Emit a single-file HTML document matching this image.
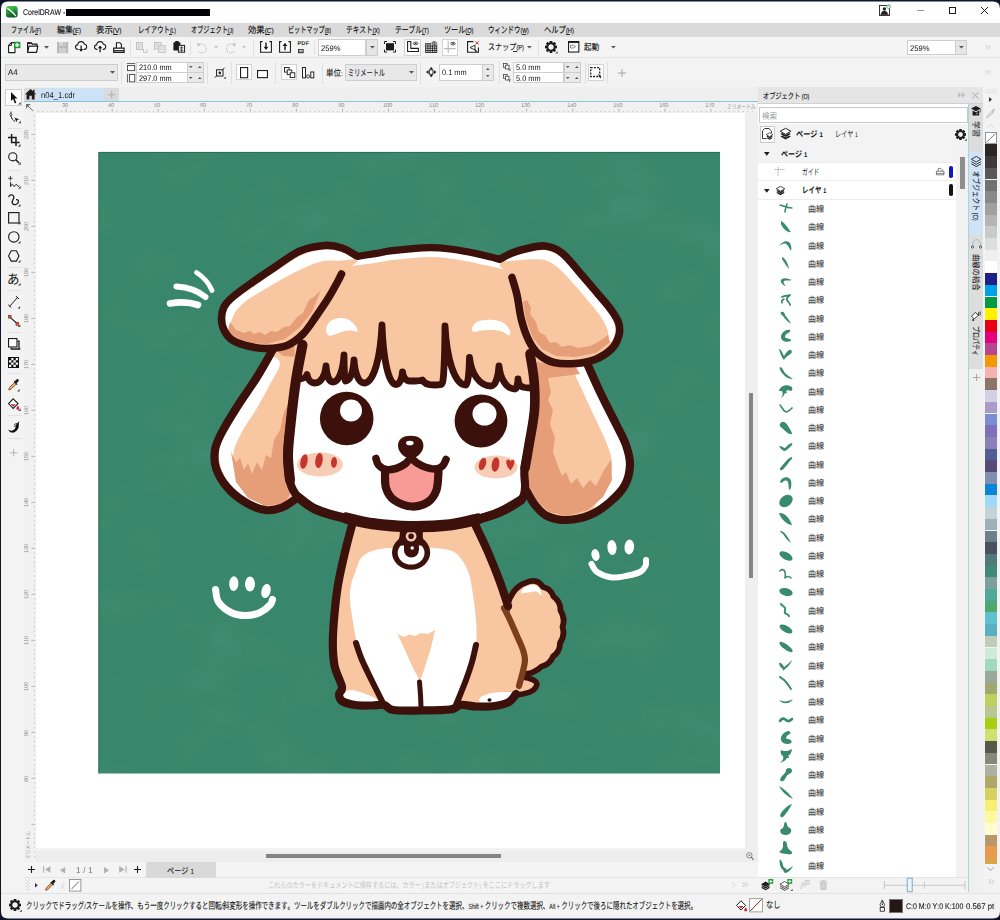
<!DOCTYPE html>
<html lang="ja">
<head>
<meta charset="utf-8">
<title>CorelDRAW - n04_1.cdr</title>
<style>
*{box-sizing:border-box;margin:0;padding:0}
html,body{width:1000px;height:920px;overflow:hidden;background:#10162a}
body{font-family:"Liberation Sans",sans-serif;font-size:8.5px;color:#1a1a1a;-webkit-font-smoothing:antialiased;text-rendering:geometricPrecision;font-kerning:none}
#win{position:absolute;left:0;top:0;width:1000px;height:920px;background:#f3f3f3;overflow:hidden}
#frame{left:0;top:0;width:1000px;height:920px;z-index:50;pointer-events:none}
#win>*{position:absolute}
.abs{position:absolute}
.jt{display:block;overflow:visible}
.jt text{font-family:"Liberation Sans","Noto Sans CJK JP",sans-serif}
.t{position:absolute;white-space:nowrap;line-height:1}
svg{overflow:visible}
</style>
<style>
#titlebar{left:0;top:0;width:1000px;height:23px;background:#fff}
#menubar{left:0;top:23px;width:1000px;height:14px;background:#dadada}
#toolbar{left:0;top:37px;width:1000px;height:20.5px;background:#f4f4f4;border-bottom:1px solid #e4e4e4}
#propbar{left:0;top:57.5px;width:1000px;height:30px;background:#f3f3f3}
#tabrow{left:0;top:87px;width:1000px;height:16px;background:#efefef}
.lt{position:absolute;white-space:nowrap;line-height:1;font-size:7.6px;color:#222;letter-spacing:-0.1px}
.fld{position:absolute;background:#fff;border:1px solid #cfcfcf}
.cmb{position:absolute;background:#e8e8e8;border:1px solid #cdcdcd}
.frm{position:absolute;background:#fff;border:1px solid #d2d2d2}
.sep{position:absolute;width:1px;background:#e0e0e0}
.ic{position:absolute;overflow:visible}
.mu{position:absolute;top:0;height:14px}
</style>
<style>
#toolbox{left:0;top:87px;width:23.6px;height:775px;background:#f3f3f3}
#toolbox .ts{position:absolute;left:7px;width:15px;height:1px;background:#e2e2e2}
#hruler{left:23.6px;top:102.4px;width:734.4px;height:11px;background:#f1f1f1}
#vruler{left:23.6px;top:113.4px;width:12.4px;height:748px;background:#f1f1f1}
.rn{position:absolute;font-size:5.6px;color:#8b8b8b;line-height:1;white-space:nowrap;letter-spacing:-.1px}
</style>
<style>
#hscroll{left:36px;top:850.5px;width:722px;height:11.5px;background:#ededed}
#pagenav{left:23.6px;top:862px;width:734.4px;height:15.8px;background:#f4f4f4;border-bottom:1px solid #e6e6e6}
#docpal{left:23.6px;top:877.8px;width:734.4px;height:14.7px;background:#f4f4f4}
#statusbar{left:0;top:892.5px;width:1000px;height:26px;background:#f3f3f3;border-top:1px solid #e2e2e2}
</style>
<style>
#vscroll{left:745px;top:113.4px;width:13px;height:737.2px;background:#efeef0}
#docker{left:758px;top:87px;width:210px;height:805.5px;background:#fff}
#docker .hd{position:absolute;left:0;top:0;width:225px;height:16.8px;background:#e5e5e5;border-bottom:1px solid #d0d0d0}
#docker .row{position:absolute;left:0;width:197.8px;height:18.26px}
#docker .rl{position:absolute;left:0;width:197.8px;height:1px;background:#ececec}
#dtabs{left:968px;top:103.8px;width:15px;height:788.7px;background:#f0f0f0;border-left:1.4px solid #a8d4dc}
#palette{left:983px;top:87px;width:17px;height:805.5px;background:#f3f3f3}
#palette i{position:absolute;left:2.2px;width:12px;height:11.7px;display:block}
</style>
</head>
<body>
<div id="win">
<div id="pg" style="left:0;top:0;width:1000px;height:920px">
<div class="abs" style="left:36px;top:112px;width:709px;height:736px;background:#fff"></div>
<svg class="abs" style="left:98px;top:151px" width="623" height="624" viewBox="98 151 623 624">
<defs><filter id="tx" x="0" y="0" width="100%" height="100%"><feTurbulence type="fractalNoise" baseFrequency="0.012 0.016" numOctaves="3" seed="7" result="n"/><feColorMatrix in="n" type="matrix" values="0 0 0 0 1  0 0 0 0 1  0 0 0 0 1  0.9 0 0 0 -0.42"/></filter></defs>
<rect x="98.5" y="152" width="621.5" height="621.5" fill="#38866b"/>
<rect x="98.5" y="152" width="621.5" height="621.5" filter="url(#tx)" opacity="0.12"/>
<path d="M98.9 773.5V152.4H720" fill="none" stroke="#2c6a55" stroke-width="0.9"/>
<path d="M507 608C507.5 606.3 508.3 601.3 510 598C511.7 594.7 513.8 590.8 517 588C520.2 585.2 525.5 582.5 529 581.5C532.5 580.5 535.7 581.1 538 582C540.3 582.9 542.2 586.2 543 587Q550.9 588.8 553.5 596.5Q560.6 601.7 560.5 610.5Q565.5 618.3 562.5 627.0Q565.2 635.6 560.0 643.0Q560.1 651.6 553.0 656.5Q549.9 664.5 541.5 666.5Q533.8 674.0 523.0 674.0L514 650L507 620Z" fill="#f9c6a2" stroke="#3c110b" stroke-width="5.8" stroke-linecap="round" stroke-linejoin="round"/>
<path d="M521 593C520.5 592.1 523.2 588.3 525 587C526.8 585.7 529.7 584.9 532 585C534.3 585.1 537.4 585.8 539 587.5C540.6 589.2 542 594.3 541.5 595C541 595.7 538.2 591.9 536 591.5C533.8 591.1 530.5 592.2 528 592.5C525.5 592.8 521.5 593.9 521 593Z" fill="#fff"/>
<path d="M519 677C520.5 677.2 525.2 677.2 528 678C530.8 678.8 534.7 680.5 536 682C537.3 683.5 537 685.3 536 687C535 688.7 533.2 690.7 530 692C526.8 693.3 519.2 694.5 517 695" fill="#f9c6a2" stroke="#3c110b" stroke-width="5.5" stroke-linecap="round" stroke-linejoin="round"/>
<path d="M354 515C353 519.2 350 531.7 348 540C346 548.3 343.8 557 342 565C340.2 573 338.8 579.7 337.5 588C336.2 596.3 335.2 606 334.4 615C333.6 624 332.8 633.5 332.8 642C332.8 650.5 333.1 658.5 334.6 666C336.1 673.5 341.3 682.3 342 687C342.7 691.7 339 691.7 339 694C339 696.3 339.3 699.2 342 701C344.7 702.8 350 704.2 355 705C360 705.8 367.2 705.5 372 705.5C376.8 705.5 380.5 704.2 384 705C387.5 705.8 387 709.1 393 710C399 710.9 410.5 710.6 420 710.5C429.5 710.4 443.2 710.4 450 709.5C456.8 708.6 456.7 705.5 461 705C465.3 704.5 470.3 706.3 476 706.5C481.7 706.7 489.5 706.8 495 706C500.5 705.2 505.5 703.8 509 702C512.5 700.2 514 698.7 516 695C518 691.3 519.7 686.3 521 680C522.3 673.7 524.8 665 524 657C523.2 649 518.7 640.3 516 632C513.3 623.7 510.7 615.3 508 607C505.3 598.7 503.3 591.2 500 582C496.7 572.8 492.3 562.3 488 552C483.7 541.7 476.3 525.3 474 520Z" fill="#f9c6a2"/>
<path d="M372 551C376.8 549.3 383.5 548.2 390 548C396.5 547.8 404 550 411 550C418 550 425.2 547.8 432 548C438.8 548.2 447 549 452 551C457 553 459.2 556.2 462 560C464.8 563.8 467.2 568.2 469 574C470.8 579.8 471.8 587.3 473 595C474.2 602.7 475.5 611.7 476 620C476.5 628.3 477 637 476 645C475 653 472.3 660.5 470 668C467.7 675.5 464.5 683.8 462 690C459.5 696.2 461.8 702.2 455 705C448.2 707.8 432.5 707 421 707C409.5 707 393.5 708.2 386 705C378.5 701.8 379.3 694.2 376 688C372.7 681.8 369.2 675.5 366 668C362.8 660.5 359.2 650.7 357 643C354.8 635.3 354.2 629.2 353 622C351.8 614.8 350.3 606.2 350 600C349.7 593.8 350 590 351 585C352 580 354.3 574.5 356 570C357.7 565.5 358.3 561.2 361 558C363.7 554.8 367.2 552.7 372 551Z" fill="#fff"/>
<path d="M397.5 634L404 637L409 634.5L415 636L421 633L428 634L435 630L431 648L424 670L420 681L413 668L404 648Z" fill="#f9c6a2"/>
<path d="M345 692C346.7 690.8 348.5 689.7 352 690C355.5 690.3 361.7 692.3 366 694C370.3 695.7 375.7 698.3 378 700C380.3 701.7 383 703.2 380 704C377 704.8 365.7 705.3 360 705C354.3 704.7 349 703.3 346 702C343 700.7 342.2 698.7 342 697C341.8 695.3 343.3 693.2 345 692Z" fill="#fff"/>
<path d="M481 697C483 695.3 488 693.8 492 693C496 692.2 501.5 692 505 692C508.5 692 511.8 691.8 513 693C514.2 694.2 513.7 697.2 512 699C510.3 700.8 507 702.8 503 704C499 705.2 491.8 706.2 488 706C484.2 705.8 481.2 704.5 480 703C478.8 701.5 479 698.7 481 697Z" fill="#fff"/>
<ellipse cx="489.5" cy="700" rx="2" ry="1.7" fill="#1a0a08"/>
<path d="M504 608C505 610 507.8 615.3 510 620C512.2 624.7 514.8 631 517 636C519.2 641 521.7 646 523 650C524.3 654 525 656.5 525 660C525 663.5 524 666.7 523 671C522 675.3 519.7 683.5 519 686" fill="none" stroke="#7c3f1d" stroke-width="6.2" stroke-linecap="round" stroke-linejoin="round"/>
<path d="M354 518C353 521.7 350 532.2 348 540C346 547.8 343.8 557 342 565C340.2 573 338.8 579.7 337.5 588C336.2 596.3 335.2 606 334.4 615C333.6 624 332.8 633.5 332.8 642C332.8 650.5 333.1 658.5 334.6 666C336.1 673.5 341.3 682.3 342 687C342.7 691.7 339 691.7 339 694C339 696.3 339.3 699.2 342 701C344.7 702.8 350 704.2 355 705C360 705.8 367.2 705.5 372 705.5C376.8 705.5 380.5 704.2 384 705C387.5 705.8 387 709.1 393 710C399 710.9 410.5 710.6 420 710.5C429.5 710.4 443.2 710.4 450 709.5C456.8 708.6 456.7 705.5 461 705C465.3 704.5 470.3 706.3 476 706.5C481.7 706.7 489.5 706.8 495 706C500.5 705.2 505.5 704 509 702C512.5 700 514.8 695.3 516 694" fill="none" stroke="#3c110b" stroke-width="8.2" stroke-linecap="round" stroke-linejoin="round"/>
<path d="M474 522C476.3 527 483.7 542 488 552C492.3 562 496.7 573 500 582C503.3 591 506.7 602 508 606" fill="none" stroke="#3c110b" stroke-width="8.2" stroke-linecap="round" stroke-linejoin="round"/>
<path d="M356 643C357 645.8 359.3 653.7 362 660C364.7 666.3 368.3 673.5 372 681C375.7 688.5 382 701 384 705" fill="none" stroke="#3c110b" stroke-width="6" stroke-linecap="round" stroke-linejoin="round"/>
<path d="M476 645C475.3 647.8 473.7 656.2 472 662C470.3 667.8 468.7 672.8 466 680C463.3 687.2 457.7 700.8 456 705" fill="none" stroke="#3c110b" stroke-width="6" stroke-linecap="round" stroke-linejoin="round"/>
<path d="M419.5 682C419.7 684.2 420.2 690.7 420.5 695C420.8 699.3 420.9 705.8 421 708" fill="none" stroke="#3c110b" stroke-width="5" stroke-linecap="round" stroke-linejoin="round"/>
<path d="M399.5 524L423.8 524C423 532 421.5 538 425 543L397 543C400.5 538 400 532 399.5 524Z" fill="#3c110b"/>
<ellipse cx="411.1" cy="552.5" rx="19.1" ry="17.3" fill="#3c110b"/>
<ellipse cx="411.1" cy="553" rx="13.4" ry="11.6" fill="#fbfffd"/>
<circle cx="411.4" cy="550" r="7.5" fill="#3c110b"/>
<path d="M404 536H418.9V550H404Z" fill="#3c110b"/>
<path d="M397.5 545.5L404 545.5L404 541L418.9 541L418.9 545.5L425 545.5L420 538L402 538Z" fill="#3c110b"/>
<circle cx="412.2" cy="548" r="1.8" fill="#fff3ee"/>
<circle cx="411.1" cy="536.2" r="4.1" fill="none" stroke="#f8c4b2" stroke-width="2.6"/>
<path d="M306 330C301.3 321.8 280.2 343.2 272 351C263.8 358.8 262.8 367.7 257 377C251.2 386.3 243 397.5 237 407C231 416.5 224.7 426.8 221 434C217.3 441.2 215.8 444.3 215 450C214.2 455.7 214 461.8 216 468C218 474.2 222.2 481.3 227 487C231.8 492.7 238.7 498.2 245 502C251.3 505.8 258.8 509.1 265 510C271.2 510.9 276.7 509.5 282 507.5C287.3 505.5 294 504.2 297 498C300 491.8 299.5 486.3 300 470C300.5 453.7 299 423.3 300 400C301 376.7 310.7 338.2 306 330Z" fill="#f9c6a2"/>
<path d="M270 358C266 361 261.3 373.3 256 382C250.7 390.7 243.3 401 238 410C232.7 419 227.2 429 224 436C220.8 443 219.5 446.7 219 452C218.5 457.3 219.2 462.5 221 468C222.8 473.5 225.8 480 230 485C234.2 490 240.7 494.7 246 498C251.3 501.3 260.3 505.7 262 505C263.7 504.3 259 497.8 256 494C253 490.2 247.5 486.7 244 482C240.5 477.3 236.7 471.3 235 466C233.3 460.7 232.7 456 234 450C235.3 444 239.2 437 243 430C246.8 423 252.7 415.3 257 408C261.3 400.7 265.2 393.3 269 386C272.8 378.7 279.8 368.7 280 364C280.2 359.3 274 355 270 358Z" fill="#fff"/>
<path d="M231 452L236 462L240 458L244 470L248 463L252 474L257 462L262 470L266 455L271 458L274 440L280 430L284 412L290 400L292 380L296 420L292 460L292 490L285 503L265 506L248 498L236 482Z" fill="#e59e78"/>
<path d="M276 350L300 334L306 326L303 352L299 357L283 356Z" fill="#e59e78"/>
<path d="M272 351C269.5 355.3 262.8 367.7 257 377C251.2 386.3 243 397.5 237 407C231 416.5 224.7 426.8 221 434C217.3 441.2 215.8 444.3 215 450C214.2 455.7 214 461.8 216 468C218 474.2 222.2 481.3 227 487C231.8 492.7 238.7 498.2 245 502C251.3 505.8 258.8 509.1 265 510C271.2 510.9 276.7 509.5 282 507.5C287.3 505.5 294.5 499.6 297 498" fill="none" stroke="#3c110b" stroke-width="8.2" stroke-linecap="round" stroke-linejoin="round"/>
<path d="M526 336C536 326.2 573.7 351.7 586 361C598.3 370.3 595.2 381.8 600 392C604.8 402.2 610.7 413.2 615 422C619.3 430.8 623.5 437.8 626 445C628.5 452.2 630.2 458.3 630 465C629.8 471.7 628.3 478.8 625 485C621.7 491.2 615.8 497 610 502C604.2 507 597.2 512 590 515C582.8 518 574.2 519.8 567 520C559.8 520.2 552.3 518.5 547 516C541.7 513.5 538.8 509.7 535 505C531.2 500.3 525.5 502.2 524 488C522.5 473.8 525.7 445.3 526 420C526.3 394.7 516 345.8 526 336Z" fill="#f9c6a2"/>
<path d="M586 368C590 372 594.5 386.5 599 396C603.5 405.5 609 416.5 613 425C617 433.5 620.8 440.3 623 447C625.2 453.7 626.3 458.8 626 465C625.7 471.2 624 478.3 621 484C618 489.7 612.5 495 608 499C603.5 503 594.8 508.8 594 508C593.2 507.2 600.3 499 603 494C605.7 489 608.5 483.3 610 478C611.5 472.7 612.5 467.7 612 462C611.5 456.3 609.7 451 607 444C604.3 437 599.8 428.3 596 420C592.2 411.7 587.5 402 584 394C580.5 386 574.7 376.3 575 372C575.3 367.7 582 364 586 368Z" fill="#fff"/>
<path d="M534 362L575 366L580 374L548 378L551 392L548 400L553 410L550 424L555 438L553 452L558 466L562 476L566 472L571 484L577 478L583 488L590 480L596 486L604 470L611 460L612 480L603 497L588 510L567 516L549 512L538 502L528 486L530 440L537 400Z" fill="#e59e78"/>
<path d="M586 361C588.3 366.2 595.2 381.8 600 392C604.8 402.2 610.7 413.2 615 422C619.3 430.8 623.5 437.8 626 445C628.5 452.2 630.2 458.3 630 465C629.8 471.7 628.3 478.8 625 485C621.7 491.2 615.8 497 610 502C604.2 507 597.2 512 590 515C582.8 518 574.2 519.8 567 520C559.8 520.2 552.3 518.5 547 516C541.7 513.5 538.5 509.3 535 505C531.5 500.7 527.5 492.5 526 490" fill="none" stroke="#3c110b" stroke-width="8.2" stroke-linecap="round" stroke-linejoin="round"/>
<path d="M357 256C364.5 249.9 369.5 254.4 375 253.6C380.5 252.8 384.2 251.7 390 250.9C395.8 250.1 403.3 249.3 410 248.8C416.7 248.3 423.3 247.7 430 247.7C436.7 247.7 443.3 248.2 450 249C456.7 249.8 463.3 251 470 252.3C476.7 253.6 485 255.7 490 256.8C495 257.9 495 251.8 500 259C505 266.2 515 284.5 520 300C525 315.5 527.7 338.7 530 352C532.3 365.3 533.2 370.3 534 380C534.8 389.7 535.3 399.2 534.5 410C533.7 420.8 530.7 435 529 445C527.3 455 525.2 462.8 524.5 470C523.8 477.2 525.6 483 525 488C524.4 493 525.2 496 521 500C516.8 504 507.7 508.7 500 512C492.3 515.3 483.3 517.9 475 520C466.7 522.1 460.8 523.4 450 524.5C439.2 525.6 423 526.8 410 526.5C397 526.2 383.7 524.6 372 523C360.3 521.4 349.5 519.3 340 517C330.5 514.7 322 512.3 315 509C308 505.7 302.2 501.5 298 497C293.8 492.5 291.8 489 290 482C288.2 475 287.5 464.5 287.5 455C287.5 445.5 288.6 437.5 290 425C291.4 412.5 294 393.5 296 380C298 366.5 296.3 359 302 344C307.7 329 320.8 304.7 330 290C339.2 275.3 349.5 262.1 357 256Z" fill="#fff"/>
<path d="M299.0 379.0C303.4 379.0 306.4 377.0 307.0 374.5C307.6 379.2 310.6 383.0 315.0 383.0C321.1 383.0 325.1 375.4 326.0 366.0C326.6 374.8 329.1 382.0 333.0 382.0C339.1 382.0 343.1 369.9 344.0 355.0C344.1 369.3 344.7 381.0 345.5 381.0C350.2 381.0 353.3 371.6 354.0 360.0C354.8 372.6 358.5 383.0 364.0 383.0C373.9 383.0 380.6 356.9 382.0 325.0C383.1 357.7 388.3 384.5 396.0 384.5C399.6 384.5 402.0 378.9 402.5 372.0C403.1 376.9 405.9 381.0 410.0 381.0C416.9 381.0 421.5 380.6 422.5 380.0C423.5 382.8 428.1 385.0 435.0 385.0C438.9 385.0 441.4 384.6 442.0 384.0C443.6 384.0 444.8 357.9 445.0 326.0C446.7 358.4 454.4 385.0 466.0 385.0C467.9 385.0 469.2 372.6 469.5 357.5C471.2 373.2 479.2 386.0 491.0 386.0C495.4 386.0 498.4 377.0 499.0 366.0C500.3 378.6 506.2 389.0 515.0 389.0C516.6 389.0 517.8 384.5 518.0 379.0C518.4 383.4 520.2 387.0 523.0 387.0C523.7 387.6 527.0 388.0 532.0 388.0L534 370L538 338L524 316L514 280L500 259L490 256.8L470 252.3L450 249L430 247.7L410 248.8L390 250.9L375 253.6L357 256L336 282L310 318L294 338L296 380Z" fill="#f9c6a2"/>
<path d="M352 262.6C355.8 262.1 368.7 260.7 375 259.8C381.3 258.9 384.2 257.9 390 257.1C395.8 256.3 403.3 255.5 410 255C416.7 254.5 423.3 253.9 430 253.9C436.7 253.9 443.3 254.4 450 255.2C456.7 256 463.3 257.2 470 258.5C476.7 259.8 484 261.6 490 263C496 264.4 503.3 266 506 266.6" fill="none" stroke="#fff" stroke-width="6.4" stroke-linecap="round" stroke-linejoin="round"/>
<path d="M299.0 379.0C303.4 379.0 306.4 377.0 307.0 374.5C307.6 379.2 310.6 383.0 315.0 383.0C321.1 383.0 325.1 375.4 326.0 366.0C326.6 374.8 329.1 382.0 333.0 382.0C339.1 382.0 343.1 369.9 344.0 355.0C344.1 369.3 344.7 381.0 345.5 381.0C350.2 381.0 353.3 371.6 354.0 360.0C354.8 372.6 358.5 383.0 364.0 383.0C373.9 383.0 380.6 356.9 382.0 325.0C383.1 357.7 388.3 384.5 396.0 384.5C399.6 384.5 402.0 378.9 402.5 372.0C403.1 376.9 405.9 381.0 410.0 381.0C416.9 381.0 421.5 380.6 422.5 380.0C423.5 382.8 428.1 385.0 435.0 385.0C438.9 385.0 441.4 384.6 442.0 384.0C443.6 384.0 444.8 357.9 445.0 326.0C446.7 358.4 454.4 385.0 466.0 385.0C467.9 385.0 469.2 372.6 469.5 357.5C471.2 373.2 479.2 386.0 491.0 386.0C495.4 386.0 498.4 377.0 499.0 366.0C500.3 378.6 506.2 389.0 515.0 389.0C516.6 389.0 517.8 384.5 518.0 379.0C518.4 383.4 520.2 387.0 523.0 387.0C523.7 387.6 527.0 388.0 532.0 388.0" fill="none" stroke="#3c110b" stroke-width="6.8" stroke-linecap="round" stroke-linejoin="round"/>
<path d="M326 330C326 327.8 327 324.4 329 322.5C331 320.6 334.8 318.8 338 318.3C341.2 317.8 345.2 318.4 348 319.5C350.8 320.6 353.4 323 355 325C356.6 327 358.2 330.6 357.5 331.5C356.8 332.4 353.4 330.5 351 330.5C348.6 330.5 345.5 330.9 343 331.5C340.5 332.1 338.3 333.3 336 334C333.7 334.7 330.7 336.2 329 335.5C327.3 334.8 326 332.2 326 330Z" fill="#fff"/>
<path d="M472 328.5C472.3 326.9 473.8 323.9 476 322.5C478.2 321.1 481.5 320.3 485 320C488.5 319.7 493.7 319.8 497 320.5C500.3 321.2 502.8 322.2 505 324C507.2 325.8 509.3 329.1 510 331C510.7 332.9 510.2 335.3 509 335.5C507.8 335.7 505.7 332.9 503 332C500.3 331.1 496.5 330.2 493 330C489.5 329.8 485.2 330.2 482 330.5C478.8 330.8 475.7 332.3 474 332C472.3 331.7 471.7 330.1 472 328.5Z" fill="#fff"/>
<path d="M357 256.5C360 256 369.5 254.5 375 253.6C380.5 252.7 384.2 251.7 390 250.9C395.8 250.1 403.3 249.3 410 248.8C416.7 248.3 423.3 247.7 430 247.7C436.7 247.7 443.3 248.2 450 249C456.7 249.8 463.3 251 470 252.3C476.7 253.6 485 255.6 490 256.8C495 258 498.3 259.1 500 259.5" fill="none" stroke="#3c110b" stroke-width="7.2" stroke-linecap="round" stroke-linejoin="round"/>
<path d="M302.5 344C301.4 350 298.1 366.5 296 380C293.9 393.5 291.4 412.5 290 425C288.6 437.5 287.5 445.5 287.5 455C287.5 464.5 288.2 475 290 482C291.8 489 293.8 492.5 298 497C302.2 501.5 308 505.7 315 509C322 512.3 330.5 514.7 340 517C349.5 519.3 360.3 521.4 372 523C383.7 524.6 397 526.2 410 526.5C423 526.8 439.2 525.6 450 524.5C460.8 523.4 466.7 522.1 475 520C483.3 517.9 492.3 515.3 500 512C507.7 508.7 516.8 504 521 500C525.2 496 524.4 493 525 488C525.6 483 523.8 477.2 524.5 470C525.2 462.8 527.3 455 529 445C530.7 435 533.7 420.8 534.5 410C535.3 399.2 534.8 389.5 534 380C533.2 370.5 530.7 357.5 530 353" fill="none" stroke="#3c110b" stroke-width="8.2" stroke-linecap="round" stroke-linejoin="round"/>
<path d="M302.5 345C301.4 350.8 298 366.7 296 380C294 393.3 291.8 412.5 290.5 425C289.2 437.5 288.1 445.8 288 455C287.9 464.2 289.7 475.8 290 480" fill="none" stroke="#3c110b" stroke-width="10" stroke-linecap="round" stroke-linejoin="round"/>
<path d="M530 354C530.7 358.3 533.2 370.7 534 380C534.8 389.3 535.3 399.2 534.5 410C533.7 420.8 530.6 435.3 529 445C527.4 454.7 525.7 464.2 525 468" fill="none" stroke="#3c110b" stroke-width="9.6" stroke-linecap="round" stroke-linejoin="round"/>
<path d="M298 497C300.8 499 308 505.7 315 509C322 512.3 330.5 514.7 340 517C349.5 519.3 360.3 521.4 372 523C383.7 524.6 397 526.2 410 526.5C423 526.8 439.2 525.6 450 524.5C460.8 523.4 466.7 522.1 475 520C483.3 517.9 492.3 515.3 500 512C507.7 508.7 517.5 502 521 500" fill="none" stroke="#3c110b" stroke-width="9.2" stroke-linecap="round" stroke-linejoin="round"/>
<path d="M346 518C350.3 518.9 361.3 522.2 372 523.6C382.7 525 397 526.4 410 526.6C423 526.8 438.7 526.1 450 524.8C461.3 523.5 473.3 520 478 519" fill="none" stroke="#3c110b" stroke-width="11.4" stroke-linecap="round" stroke-linejoin="round"/>
<path d="M357 256C354.5 254.7 347.3 249.8 342 248C336.7 246.2 332 245 325 245.5C318 246 308.3 247.4 300 251C291.7 254.6 283.3 261.5 275 267C266.7 272.5 257.3 278.8 250 284C242.7 289.2 235.3 294.7 231 298.5C226.7 302.3 225.6 303.8 224 307C222.4 310.2 221.5 314.2 221.5 318C221.5 321.8 222.1 326.2 224 330C225.9 333.8 228.7 337.8 233 340.5C237.3 343.2 244.3 345.2 250 346.5C255.7 347.8 260.8 348.7 267 348.5C273.2 348.3 281 347.9 287 345.5C293 343.1 298.2 338.8 303 334C307.8 329.2 311.7 322.7 316 316.5C320.3 310.3 325.4 302.8 329 297C332.6 291.2 335.4 285.8 337.5 282C339.6 278.2 340.8 275.3 341.5 274L357 262Z" fill="#f9c6a2"/>
<path d="M354 258C353.3 256.4 342.8 252.4 338 251C333.2 249.6 331 248.8 325 249.5C319 250.2 309.8 251.6 302 255C294.2 258.4 286.2 264.7 278 270C269.8 275.3 260.3 282 253 287C245.7 292 238.5 296.5 234 300C229.5 303.5 227.8 305 226 308C224.2 311 223.5 314.7 223.5 318C223.5 321.3 225.1 325.5 226 328C226.9 330.5 228.2 334 229 333C229.8 332 229.8 325.7 231 322C232.2 318.3 233.5 314.5 236 311C238.5 307.5 241.7 304.3 246 301C250.3 297.7 255.5 294.9 262 291C268.5 287.1 277.7 281.5 285 277.5C292.3 273.5 299.5 269.8 306 267C312.5 264.2 318 262.1 324 261C330 259.9 337 261 342 260.5C347 260 354.7 259.6 354 258Z" fill="#fff"/>
<path d="M230 322L236 330L244 333L250 331L254 334L260 332L265 335L271 331L277 332L284 327L290 326L297 317L303 313L309 300L314 297L321 290L312 312L300 327L285 339L267 344L250 343L235 337L228 330Z" fill="#e59e78"/>
<path d="M357 256C354.5 254.7 347.3 249.8 342 248C336.7 246.2 332 245 325 245.5C318 246 308.3 247.4 300 251C291.7 254.6 283.3 261.5 275 267C266.7 272.5 257.3 278.8 250 284C242.7 289.2 235.3 294.7 231 298.5C226.7 302.3 225.6 303.8 224 307C222.4 310.2 221.5 314.2 221.5 318C221.5 321.8 222.1 326.2 224 330C225.9 333.8 228.7 337.8 233 340.5C237.3 343.2 244.3 345.2 250 346.5C255.7 347.8 260.8 348.7 267 348.5C273.2 348.3 281 347.9 287 345.5C293 343.1 298.2 338.8 303 334C307.8 329.2 311.7 322.7 316 316.5C320.3 310.3 325.4 302.8 329 297C332.6 291.2 335.4 285.8 337.5 282C339.6 278.2 340.8 275.3 341.5 274" fill="none" stroke="#3c110b" stroke-width="7.6" stroke-linecap="round" stroke-linejoin="round"/>
<path d="M500 259C502 258 507.8 254.7 512 253C516.2 251.3 519.5 250.2 525 249C530.5 247.8 538.8 245.3 545 246C551.2 246.7 556.1 248.4 562 253C567.9 257.6 574.5 266.7 580.5 273.5C586.5 280.3 593 288.1 598 294C603 299.9 607.1 304.2 610.5 309C613.9 313.8 617.1 318.2 618.5 322.5C619.9 326.8 620.1 330.7 619 335C617.9 339.3 616 344.4 612 348.5C608 352.6 601.2 357 595 359.5C588.8 362 581.8 363 575 363.5C568.2 364 560 364 554 362.5C548 361 543.2 358.1 539 354.5C534.8 350.9 531.9 346.8 529 341C526.1 335.2 523.5 327.7 521.5 320C519.5 312.3 518.6 302.1 517 295C515.4 287.9 512.8 280.4 512 277.5L500 266Z" fill="#f9c6a2"/>
<path d="M504 261C503.5 259.8 518.3 254.3 525 252.5C531.7 250.7 538.2 249.4 544 250C549.8 250.6 554.3 251.7 560 256C565.7 260.3 572.2 269.3 578 276C583.8 282.7 590.2 290.2 595 296C599.8 301.8 603.8 306.4 607 311C610.2 315.6 613.2 319.7 614.5 323.5C615.8 327.3 615.8 330.9 615 334C614.2 337.1 611.2 342.7 610 342C608.8 341.3 609 334.2 607.5 330C606 325.8 603.9 321.5 601 317C598.1 312.5 594.3 308.2 590 303C585.7 297.8 580 291.1 575 285.5C570 279.9 564.8 273.7 560 269.5C555.2 265.3 551.3 262.2 546 260.5C540.7 258.8 535 259.4 528 259.5C521 259.6 504.5 262.2 504 261Z" fill="#fff"/>
<path d="M527 300L531 308L530 314L536 322L539 332L545 335L550 343L556 342L562 347L570 345L578 348L590 346L600 341L608 335L610 342L596 353L575 357L556 356L542 349L533 338L526 320L523 302Z" fill="#e59e78"/>
<path d="M500 259C502 258 507.8 254.7 512 253C516.2 251.3 519.5 250.2 525 249C530.5 247.8 538.8 245.3 545 246C551.2 246.7 556.1 248.4 562 253C567.9 257.6 574.5 266.7 580.5 273.5C586.5 280.3 593 288.1 598 294C603 299.9 607.1 304.2 610.5 309C613.9 313.8 617.1 318.2 618.5 322.5C619.9 326.8 620.1 330.7 619 335C617.9 339.3 616 344.4 612 348.5C608 352.6 601.2 357 595 359.5C588.8 362 581.8 363 575 363.5C568.2 364 560 364 554 362.5C548 361 543.2 358.1 539 354.5C534.8 350.9 531.9 346.8 529 341C526.1 335.2 523.5 327.7 521.5 320C519.5 312.3 518.6 302.1 517 295C515.4 287.9 512.8 280.4 512 277.5" fill="none" stroke="#3c110b" stroke-width="7.6" stroke-linecap="round" stroke-linejoin="round"/>
<circle cx="346.7" cy="418.5" r="26.8" fill="#3c110b"/><circle cx="351" cy="410.5" r="11" fill="#fff"/>
<circle cx="481" cy="421" r="26.4" fill="#3c110b"/><ellipse cx="484.5" cy="414" rx="12" ry="11.5" fill="#fff"/>
<ellipse cx="320" cy="464.5" rx="23" ry="12" fill="#f8cdb5"/>
<ellipse cx="304" cy="461.5" rx="3.5" ry="7.4" fill="#c4362c" transform="rotate(12 304 461.5)"/>
<ellipse cx="319" cy="460.5" rx="3.7" ry="7.6" fill="#c4362c" transform="rotate(8 319 460.5)"/>
<ellipse cx="334" cy="462.5" rx="3" ry="5.4" fill="#c4362c" transform="rotate(5 334 462.5)"/>
<ellipse cx="496" cy="467" rx="21.5" ry="11.5" fill="#f8cdb5"/>
<ellipse cx="482.5" cy="464" rx="3.4" ry="6.4" fill="#c4362c" transform="rotate(18 482.5 464)"/>
<ellipse cx="495.5" cy="464.5" rx="3.8" ry="7.4" fill="#c4362c" transform="rotate(8 495.5 464.5)"/>
<path d="M506.5 460.5C508 458.5 510 459.5 510.5 461.5C511.5 459 514 459 514.5 461.5C514.5 465 512 468.5 510.5 470.5C508 468 505.5 464 506.5 460.5Z" fill="#c4362c"/>
<path d="M385 470C382.6 473.8 384 483 385.5 488C387 493 389.6 496.9 394 500C398.4 503.1 406.3 506.2 412 506.5C417.7 506.8 423.9 504.8 428 502C432.1 499.2 434.7 495.3 436.5 490C438.3 484.7 441.4 474.3 439 470C436.6 465.7 426.7 465.8 422 464C417.3 462.2 414.7 458.8 411 459C407.3 459.2 404.3 463.2 400 465C395.7 466.8 387.4 466.2 385 470Z" fill="#f89b96"/>
<path d="M385 472C385.2 474.7 384.5 483.3 386 488C387.5 492.7 389.7 496.9 394 500C398.3 503.1 406.3 506.2 412 506.5C417.7 506.8 423.9 504.8 428 502C432.1 499.2 434.8 495 436.5 490C438.2 485 438.2 475 438.5 472" fill="none" stroke="#3c110b" stroke-width="8.2" stroke-linecap="round" stroke-linejoin="round"/>
<path d="M376 458.5C376.4 459.6 376.8 463.2 378.5 465C380.2 466.8 383.1 468.9 386 469.5C388.9 470.1 392.8 469.4 396 468.5C399.2 467.6 402.5 465.7 405 464C407.5 462.3 409 458.7 411 458.5C413 458.3 414.7 461.6 417 463C419.3 464.4 422 466 425 467C428 468 432.1 469.2 435 469C437.9 468.8 440.7 467.6 442.5 466C444.3 464.4 445.4 460.6 446 459.5" fill="none" stroke="#3c110b" stroke-width="7.6" stroke-linecap="round" stroke-linejoin="round"/>
<path d="M398 445.5C398 439 403.5 435.8 410.7 435.8C418 435.8 423.4 439 423.4 445.5C423.4 452 417.5 458.2 410.7 458.2C404 458.2 398 452 398 445.5Z" fill="#3c110b"/><ellipse cx="409.8" cy="443" rx="3.8" ry="2.3" fill="#fff"/>
<path d="M196.5 272.5Q207.5 279.5 212 290.5" fill="none" stroke="#fff" stroke-width="4.8" stroke-linecap="round" stroke-linejoin="round"/>
<path d="M176.5 286.5Q194 287.5 205.5 297" fill="none" stroke="#fff" stroke-width="6" stroke-linecap="round" stroke-linejoin="round"/>
<path d="M170 303.6Q185 300.6 198 305" fill="none" stroke="#fff" stroke-width="6.6" stroke-linecap="round" stroke-linejoin="round"/>
<ellipse cx="233.8" cy="583.7" rx="4.6" ry="7.4" fill="#fff" transform="rotate(3 233.8 583.7)"/>
<ellipse cx="250" cy="584" rx="5" ry="7.6" fill="#fff" transform="rotate(0 250 584)"/>
<ellipse cx="266" cy="591" rx="4.6" ry="7.2" fill="#fff" transform="rotate(14 266 591)"/>
<path d="M215.6 589.5C216.1 591.6 215.9 598.2 218.5 602C221.1 605.8 226.4 610.2 231 612.5C235.6 614.8 241.2 615.6 246 615.6C250.8 615.6 256 614.3 260 612.5C264 610.7 267.9 607.2 270 605C272.1 602.8 272.1 600.4 272.5 599.5" fill="none" stroke="#fff" stroke-width="7" stroke-linecap="round" stroke-linejoin="round"/>
<ellipse cx="595.5" cy="555" rx="4" ry="6" fill="#fff" transform="rotate(-12 595.5 555)"/>
<ellipse cx="612" cy="547.5" rx="4.6" ry="7.6" fill="#fff" transform="rotate(-4 612 547.5)"/>
<ellipse cx="629.3" cy="547" rx="4.8" ry="7.6" fill="#fff" transform="rotate(4 629.3 547)"/>
<path d="M591.5 564C592.4 565.3 593.6 569.8 597 572C600.4 574.2 606.8 576.9 612 577.5C617.2 578.1 623.3 576.4 628 575.5C632.7 574.6 637.1 573.6 640 572C642.9 570.4 644.5 568 645.5 566C646.5 564 645.9 561 646 560" fill="none" stroke="#fff" stroke-width="6" stroke-linecap="round" stroke-linejoin="round"/>
</svg>
</div>
<div id="titlebar">
<svg class="ic" style="left:5.6px;top:6px" width="11.6" height="11.4" viewBox="0 0 11.6 11.4"><defs><linearGradient id="lg" x1="0" y1="0" x2="0.4" y2="1"><stop offset="0" stop-color="#5fd35a"/><stop offset="0.55" stop-color="#1f9a3a"/><stop offset="1" stop-color="#0d5a22"/></linearGradient></defs><rect width="11.6" height="11.4" rx="2.6" fill="url(#lg)"/><path d="M1.6 1.8C4 3 8 6.6 10.4 9.8L9.2 10.6C6.6 7.6 3.4 4.6 1 3Z" fill="#fff"/><path d="M1 3C3.4 4.6 6.6 7.6 9.2 10.6L8 10.9C5.6 8 3 5.4 0.9 4.2Z" fill="#0b4a1c" opacity=".55"/></svg>
<div class="t" style="left:22.5px;top:7.87px;font-size:8.3px;color:#1a1a1a;transform:scaleX(0.845);transform-origin:0 0;-webkit-text-stroke:0.15px #1a1a1a;">CorelDRAW -</div>
<div class="abs" style="left:66.4px;top:8.6px;width:144px;height:7.2px;background:#000"></div>
<svg class="ic" style="left:878.6px;top:5px" width="11.8" height="11" viewBox="0 0 11.8 11"><rect x=".5" y=".5" width="10" height="10" fill="#fff" stroke="#222" stroke-width=".9"/><circle cx="5.4" cy="4" r="1.7" fill="#222"/><path d="M2 9.6C2 6.6 3.6 6 5.4 6S8.8 6.6 8.8 9.6Z" fill="#222"/><path d="M1.4 9.3H9.6" stroke="#222" stroke-width=".9"/><circle cx="9.6" cy="1.6" r="1.9" fill="#fff" stroke="#3aa85a" stroke-width=".8"/><path d="M9.6 .4V1.7" stroke="#3aa85a" stroke-width=".7"/></svg>
<div class="abs" style="left:917px;top:10.3px;width:7px;height:1px;background:#9a9a9a"></div>
<div class="abs" style="left:949px;top:7px;width:7px;height:7px;border:1px solid #1a1a1a"></div>
<svg class="ic" style="left:981px;top:7px" width="7" height="7" viewBox="0 0 7 7"><path d="M0 0L7 7M7 0L0 7" stroke="#1a1a1a" stroke-width="1"/></svg>
</div>
<div id="menubar">
<svg class="jt" style="position:absolute;left:10.9px;top:2.3px;" width="30.2" height="10.3" viewBox="0 -8.1 30.2 10.3" fill="#101010" stroke="#101010" stroke-width=".15"><text x="0" y="0" font-size="9" textLength="30.2" lengthAdjust="spacingAndGlyphs">ファイル<tspan font-size="7">(F)</tspan></text></svg>
<div class="abs" style="left:34.8px;top:11.4px;width:3.4px;height:.7px;background:#333"></div>
<svg class="jt" style="position:absolute;left:57px;top:2.3px;" width="24.1" height="10.3" viewBox="0 -8.1 24.1 10.3" fill="#101010" stroke="#101010" stroke-width=".15"><text x="0" y="0" font-size="9" textLength="24.1" lengthAdjust="spacingAndGlyphs">編集<tspan font-size="7">(E)</tspan></text></svg>
<div class="abs" style="left:73.2px;top:11.4px;width:4.3px;height:.7px;background:#333"></div>
<svg class="jt" style="position:absolute;left:96.2px;top:2.3px;" width="25.5" height="10.3" viewBox="0 -8.1 25.5 10.3" fill="#101010" stroke="#101010" stroke-width=".15"><text x="0" y="0" font-size="9" textLength="25.5" lengthAdjust="spacingAndGlyphs">表示<tspan font-size="7">(V)</tspan></text></svg>
<div class="abs" style="left:113.3px;top:11.4px;width:4.6px;height:.7px;background:#333"></div>
<svg class="jt" style="position:absolute;left:137.5px;top:2.3px;" width="38.0" height="10.3" viewBox="0 -8.1 38.0 10.3" fill="#101010" stroke="#101010" stroke-width=".15"><text x="0" y="0" font-size="9" textLength="38" lengthAdjust="spacingAndGlyphs">レイアウト<tspan font-size="7">(L)</tspan></text></svg>
<div class="abs" style="left:168.8px;top:11.4px;width:3.6px;height:.7px;background:#333"></div>
<svg class="jt" style="position:absolute;left:190.6px;top:2.3px;" width="42.4" height="10.3" viewBox="0 -8.1 42.4 10.3" fill="#101010" stroke="#101010" stroke-width=".15"><text x="0" y="0" font-size="9" textLength="42.4" lengthAdjust="spacingAndGlyphs">オブジェクト<tspan font-size="7">(J)</tspan></text></svg>
<div class="abs" style="left:226.5px;top:11.4px;width:3.5px;height:.7px;background:#333"></div>
<svg class="jt" style="position:absolute;left:248px;top:2.3px;" width="25.7" height="10.3" viewBox="0 -8.1 25.7 10.3" fill="#101010" stroke="#101010" stroke-width=".15"><text x="0" y="0" font-size="9" textLength="25.7" lengthAdjust="spacingAndGlyphs">効果<tspan font-size="7">(C)</tspan></text></svg>
<div class="abs" style="left:265.4px;top:11.4px;width:4.6px;height:.7px;background:#333"></div>
<svg class="jt" style="position:absolute;left:288px;top:2.3px;" width="43.1" height="10.3" viewBox="0 -8.1 43.1 10.3" fill="#101010" stroke="#101010" stroke-width=".15"><text x="0" y="0" font-size="9" textLength="43.1" lengthAdjust="spacingAndGlyphs">ビットマップ<tspan font-size="7">(B)</tspan></text></svg>
<div class="abs" style="left:324.7px;top:11.4px;width:3.5px;height:.7px;background:#333"></div>
<svg class="jt" style="position:absolute;left:345.6px;top:2.3px;" width="33.7" height="10.3" viewBox="0 -8.1 33.7 10.3" fill="#101010" stroke="#101010" stroke-width=".15"><text x="0" y="0" font-size="9" textLength="33.7" lengthAdjust="spacingAndGlyphs">テキスト<tspan font-size="7">(X)</tspan></text></svg>
<div class="abs" style="left:372.4px;top:11.4px;width:3.7px;height:.7px;background:#333"></div>
<svg class="jt" style="position:absolute;left:394.7px;top:2.3px;" width="33.8" height="10.3" viewBox="0 -8.1 33.8 10.3" fill="#101010" stroke="#101010" stroke-width=".15"><text x="0" y="0" font-size="9" textLength="33.8" lengthAdjust="spacingAndGlyphs">テーブル<tspan font-size="7">(T)</tspan></text></svg>
<div class="abs" style="left:421.5px;top:11.4px;width:3.8px;height:.7px;background:#333"></div>
<svg class="jt" style="position:absolute;left:443.7px;top:2.3px;" width="29.3" height="10.3" viewBox="0 -8.1 29.3 10.3" fill="#101010" stroke="#101010" stroke-width=".15"><text x="0" y="0" font-size="9" textLength="29.3" lengthAdjust="spacingAndGlyphs">ツール<tspan font-size="7">(O)</tspan></text></svg>
<div class="abs" style="left:465.8px;top:11.4px;width:3.9px;height:.7px;background:#333"></div>
<svg class="jt" style="position:absolute;left:488px;top:2.3px;" width="40.7" height="10.3" viewBox="0 -8.1 40.7 10.3" fill="#101010" stroke="#101010" stroke-width=".15"><text x="0" y="0" font-size="9" textLength="40.7" lengthAdjust="spacingAndGlyphs">ウィンドウ<tspan font-size="7">(W)</tspan></text></svg>
<div class="abs" style="left:521.9px;top:11.4px;width:3.7px;height:.7px;background:#333"></div>
<svg class="jt" style="position:absolute;left:543.7px;top:2.3px;" width="29.8" height="10.3" viewBox="0 -8.1 29.8 10.3" fill="#101010" stroke="#101010" stroke-width=".15"><text x="0" y="0" font-size="9" textLength="29.8" lengthAdjust="spacingAndGlyphs">ヘルプ<tspan font-size="7">(H)</tspan></text></svg>
<div class="abs" style="left:566.1px;top:11.4px;width:4.1px;height:.7px;background:#333"></div>
</div>
<div id="toolbar">
<svg class="ic" style="left:8px;top:4.6px" width="12.4" height="11.2" viewBox="0 0 12.4 11.2"><path d="M.6 3.4L3.4 .6H7V10.6H.6Z" fill="#fff" stroke="#1c1c1c" stroke-width="1.1" stroke-linejoin="round"/><path d="M.6 3.6H3.5V.6" fill="none" stroke="#1c1c1c" stroke-width=".9"/><rect x="6" y="-.2" width="6.4" height="6.4" fill="#1b9a3a"/><path d="M9.2 1V5M7.2 3H11.2" stroke="#fff" stroke-width="1.5"/></svg>
<svg class="ic" style="left:27px;top:4.8px" width="11.4" height="11" viewBox="0 0 11.4 11"><path d="M.6 10.2V.8H4.2L5.4 2.2H10V4" fill="none" stroke="#1c1c1c" stroke-width="1.2" stroke-linejoin="round"/><path d="M.6 10.3L2 4.2H10.8L9.6 10.3Z" fill="#fff" stroke="#1c1c1c" stroke-width="1.2" stroke-linejoin="round"/><path d="M.4 .6H4.4L5.6 2H.4Z" fill="#1c1c1c"/></svg>
<svg class="ic" style="left:43.8px;top:8.8px" width="5" height="2.8" viewBox="0 0 5 2.8"><path d="M0 0H5L2.5 2.8Z" fill="#555"/></svg>
<svg class="ic" style="left:57px;top:4.6px" width="11.2" height="11.2" viewBox="0 0 11.2 11.2"><rect width="11.2" height="11.2" fill="#b9b9b9"/><rect x="2.2" y="0" width="6.6" height="3.8" fill="#d9d9d9"/><rect x="6" y=".6" width="1.8" height="2.6" fill="#b9b9b9"/><rect x="2" y="6" width="7.2" height="5.2" fill="#cfcfcf"/></svg>
<svg class="ic" style="left:75px;top:4.4px" width="12.2" height="11.6" viewBox="0 0 12.2 11.6"><path d="M3 8.4C1.4 8.4 .5 7.3 .5 6.1C.5 4.8 1.5 3.9 2.7 3.9C2.9 2 4.3 .6 6.1 .6C7.7 .6 9 1.7 9.4 3.3C10.8 3.4 11.7 4.5 11.7 5.8C11.7 7.3 10.6 8.4 9.2 8.4" fill="#fff" stroke="#1c1c1c" stroke-width="1.05" stroke-linecap="round"/><path d="M6.1 4.4V10" stroke="#1c1c1c" stroke-width="1.3"/><path d="M3.8 8L6.1 10.8L8.4 8Z" fill="#1c1c1c"/></svg>
<svg class="ic" style="left:94px;top:4.4px" width="12.2" height="11.6" viewBox="0 0 12.2 11.6"><path d="M3 8.4C1.4 8.4 .5 7.3 .5 6.1C.5 4.8 1.5 3.9 2.7 3.9C2.9 2 4.3 .6 6.1 .6C7.7 .6 9 1.7 9.4 3.3C10.8 3.4 11.7 4.5 11.7 5.8C11.7 7.3 10.6 8.4 9.2 8.4" fill="#fff" stroke="#1c1c1c" stroke-width="1.05" stroke-linecap="round"/><path d="M6.1 5.6V11.2" stroke="#1c1c1c" stroke-width="1.3"/><path d="M3.8 7.2L6.1 4.4L8.4 7.2Z" fill="#1c1c1c"/></svg>
<svg class="ic" style="left:113px;top:4.6px" width="11.8" height="11.2" viewBox="0 0 11.8 11.2"><path d="M3.4 6V.7H6.8L8.4 2.3V6" fill="#fff" stroke="#1c1c1c" stroke-width="1.1"/><path d="M.7 10.5V6.2H11.1V10.5Z" fill="#fff" stroke="#1c1c1c" stroke-width="1.2"/><path d="M.7 8.8H11.1" stroke="#1c1c1c" stroke-width="1.4"/></svg>
<div class="sep" style="left:130px;top:3.5px;height:14px"></div>
<svg class="ic" style="left:135.6px;top:4.8px" width="11.6" height="11" viewBox="0 0 11.6 11"><rect x=".5" y=".5" width="6" height="7" fill="#e4e4e4" stroke="#bdbdbd" stroke-width=".9"/><path d="M2 2.4H5M2 4H5M2 5.6H4" stroke="#c9c9c9" stroke-width=".7"/><path d="M7.5 7V10.4H11V7" fill="none" stroke="#bdbdbd" stroke-width=".9"/></svg>
<svg class="ic" style="left:154px;top:4.8px" width="11.8" height="11" viewBox="0 0 11.8 11"><rect x=".5" y=".5" width="6.4" height="6.6" fill="#e6e6e6" stroke="#bdbdbd" stroke-width=".9"/><rect x="4.8" y="3.8" width="6.4" height="6.6" fill="#ececec" stroke="#bdbdbd" stroke-width=".9"/><path d="M1.8 2.4H5.6M1.8 4H4M6 6H10M6 7.6H10" stroke="#cbcbcb" stroke-width=".7"/></svg>
<svg class="ic" style="left:173px;top:4.4px" width="12.2" height="11.6" viewBox="0 0 12.2 11.6"><rect x=".4" y="1.2" width="7" height="8.4" rx=".6" fill="#1c1c1c"/><rect x="2.2" y="0" width="3.4" height="2.2" fill="#1c1c1c"/><rect x="5.4" y="4.4" width="6.2" height="6.8" fill="#fff" stroke="#1c1c1c" stroke-width="1"/><path d="M6.6 6.4H10.4M6.6 8H10.4M6.6 9.6H10.4M8.5 5V11" stroke="#1c1c1c" stroke-width=".6"/></svg>
<div class="sep" style="left:190.4px;top:3.5px;height:14px"></div>
<svg class="ic" style="left:196px;top:4.6px" width="11.8" height="11.4" viewBox="0 0 11.8 11.4"><path d="M3 3.2A4.4 4.4 0 1 1 2 8.6" fill="none" stroke="#c2c2c2" stroke-width="1.1" stroke-dasharray="1.4 1"/><path d="M.8 1.2L4.8 1.6L2 4.8Z" fill="#c2c2c2"/></svg>
<svg class="ic" style="left:213.6px;top:9.0px" width="4.4" height="2.4" viewBox="0 0 4.4 2.4"><path d="M0 0H4.4L2.2 2.4Z" fill="#c4c4c4"/></svg>
<svg class="ic" style="left:225.4px;top:4.6px" width="11.8" height="11.4" viewBox="0 0 11.8 11.4"><path d="M8.8 3.2A4.4 4.4 0 1 0 9.8 8.6" fill="none" stroke="#c2c2c2" stroke-width="1.1" stroke-dasharray="1.4 1"/><path d="M11 1.2L7 1.6L9.8 4.8Z" fill="#c2c2c2"/></svg>
<svg class="ic" style="left:241.8px;top:9.0px" width="4.4" height="2.4" viewBox="0 0 4.4 2.4"><path d="M0 0H4.4L2.2 2.4Z" fill="#c4c4c4"/></svg>
<div class="sep" style="left:252.6px;top:3.5px;height:14px"></div>
<svg class="ic" style="left:260px;top:4.3px" width="12" height="11.8" viewBox="0 0 12 11.8"><path d="M2.6 .6H.6V11.2H11.4V.6H9.4" fill="#fff" stroke="#1c1c1c" stroke-width="1.1"/><path d="M6 1.6V7" stroke="#1c1c1c" stroke-width="1.4"/><path d="M3.6 5.8L6 9L8.4 5.8Z" fill="#1c1c1c"/></svg>
<svg class="ic" style="left:279px;top:4.3px" width="12" height="11.8" viewBox="0 0 12 11.8"><path d="M2.6 .6H.6V11.2H11.4V.6H9.4" fill="#fff" stroke="#1c1c1c" stroke-width="1.1"/><path d="M6 3.6V9.2" stroke="#1c1c1c" stroke-width="1.4"/><path d="M3.6 5L6 1.8L8.4 5Z" fill="#1c1c1c"/></svg>
<div class="lt" style="left:297.4px;top:5.1px;font-size:5.6px;font-weight:bold;letter-spacing:.25px;color:#2a2a2a">PDF</div>
<svg class="ic" style="left:297.6px;top:11.6px" width="5.6" height="4.2" viewBox="0 0 5.6 4.2"><rect x=".4" y=".4" width="4.8" height="3.4" fill="none" stroke="#1c1c1c" stroke-width=".8"/><path d="M1.6 3.8V1.6M2.8 3.8V2.4M4 3.8V1.2" stroke="#1c1c1c" stroke-width=".7"/></svg>
<div class="sep" style="left:313.6px;top:3.5px;height:14px"></div>
<div class="fld" style="left:318.4px;top:2.4px;width:48px;height:16.2px"></div>
<div class="cmb" style="left:365.6px;top:2.4px;width:12.8px;height:16.2px;background:#e6e6e6"></div>
<div class="t" style="left:321.2px;top:8.03px;font-size:8.0px;color:#111;transform:scaleX(0.95);transform-origin:0 0;">259%</div>
<svg class="ic" style="left:369.8px;top:8.7px" width="4.8" height="2.6" viewBox="0 0 4.8 2.6"><path d="M0 0H4.8L2.4 2.6Z" fill="#555"/></svg>
<svg class="ic" style="left:383.8px;top:4.3px" width="12" height="11.6" viewBox="0 0 12 11.6"><rect x="2" y="2.2" width="8" height="7.2" fill="#1c1c1c"/><path d="M.5 3V.5H3M9 .5H11.5V3M11.5 8.6V11.1H9M3 11.1H.5V8.6" fill="none" stroke="#1c1c1c" stroke-width="1"/></svg>
<div class="frm" style="left:404.4px;top:2.4px;width:16.2px;height:16.2px"></div>
<svg class="ic" style="left:406.8px;top:4.4px" width="12" height="11.6" viewBox="0 0 12 11.6"><path d="M.6 .4V10.6H11.4V7.4H3.8V.4Z" fill="#fff" stroke="#1c1c1c" stroke-width="1.05"/><ellipse cx="8.6" cy="2.4" rx="2.3" ry="1.35" fill="#fff" stroke="#1c1c1c" stroke-width=".75"/><ellipse cx="8.6" cy="2.4" rx=".9" ry=".7" fill="#1c1c1c"/></svg>
<svg class="ic" style="left:425px;top:4px" width="12.4" height="12" viewBox="0 0 12.4 12"><path d="M.4 2.8H12" stroke="#1c1c1c" stroke-width=".9"/><path d="M.4 5H12" stroke="#1c1c1c" stroke-width=".9"/><path d="M.4 7.2H12" stroke="#1c1c1c" stroke-width=".9"/><path d="M.4 9.4H12" stroke="#1c1c1c" stroke-width=".9"/><path d="M.4 11.4H12" stroke="#1c1c1c" stroke-width=".9"/><path d="M0.6 2.4V11.6" stroke="#1c1c1c" stroke-width=".8"/><path d="M2.9 2.4V11.6" stroke="#1c1c1c" stroke-width=".8"/><path d="M5.2 2.4V11.6" stroke="#1c1c1c" stroke-width=".8"/><path d="M7.5 2.4V11.6" stroke="#1c1c1c" stroke-width=".8"/><path d="M9.8 2.4V11.6" stroke="#1c1c1c" stroke-width=".8"/><path d="M11.8 2.4V11.6" stroke="#1c1c1c" stroke-width=".8"/><rect x="6.2" y="0" width="6" height="3.6" fill="#f4f4f4"/><ellipse cx="9.2" cy="2" rx="2.3" ry="1.35" fill="#fff" stroke="#1c1c1c" stroke-width=".75"/><ellipse cx="9.2" cy="2" rx=".9" ry=".7" fill="#1c1c1c"/></svg>
<div class="frm" style="left:441.9px;top:2.4px;width:16px;height:16.2px"></div>
<svg class="ic" style="left:443.8px;top:4.2px" width="12.4" height="12" viewBox="0 0 12.4 12"><path d="M4.2 0V12M0 7.6H11.6" stroke="#b9b9b9" stroke-width="1.1"/><ellipse cx="9" cy="2.6" rx="2.3" ry="1.35" fill="#fff" stroke="#1c1c1c" stroke-width=".75"/><ellipse cx="9" cy="2.6" rx=".9" ry=".7" fill="#1c1c1c"/></svg>
<svg class="ic" style="left:466.8px;top:4.4px" width="12.8" height="11.8" viewBox="0 0 12.8 11.8"><path d="M6.4 .6H.6V11.2H11.4V6.4" fill="#fff" stroke="#1c1c1c" stroke-width="1.1"/><path d="M3 6.6L8 4.2V9Z" fill="none" stroke="#1c1c1c" stroke-width=".9"/><path d="M7.4 7.6L10.6 10.8H8.2Z" fill="#1c1c1c"/><path d="M8.4 .4L11.8 3.6M11.8 .4L8.4 3.6" stroke="#d03a2e" stroke-width="1"/></svg>
<svg class="jt" style="position:absolute;left:487.8px;top:5.1px;" width="36.0" height="10.1" viewBox="0 -7.9 36.0 10.1" fill="#151515" stroke="#151515" stroke-width=".1"><text x="0" y="0" font-size="8.8" textLength="36" lengthAdjust="spacingAndGlyphs">スナップ<tspan font-size="7.04">(P)</tspan></text></svg>
<div class="abs" style="left:513.4px;top:14.2px;width:3.6px;height:.7px;background:#333"></div>
<svg class="ic" style="left:527.2px;top:8.5px" width="4.8" height="2.6" viewBox="0 0 4.8 2.6"><path d="M0 0H4.8L2.4 2.6Z" fill="#555"/></svg>
<div class="sep" style="left:538px;top:3.5px;height:14px"></div>
<svg class="ic" style="left:545px;top:4px" width="12" height="12" viewBox="0 0 12 12"><g transform="translate(6 6)"><rect x="-1.35" y="-6" width="2.7" height="3" fill="#1c1c1c" transform="rotate(0)"/><rect x="-1.35" y="-6" width="2.7" height="3" fill="#1c1c1c" transform="rotate(45)"/><rect x="-1.35" y="-6" width="2.7" height="3" fill="#1c1c1c" transform="rotate(90)"/><rect x="-1.35" y="-6" width="2.7" height="3" fill="#1c1c1c" transform="rotate(135)"/><rect x="-1.35" y="-6" width="2.7" height="3" fill="#1c1c1c" transform="rotate(180)"/><rect x="-1.35" y="-6" width="2.7" height="3" fill="#1c1c1c" transform="rotate(225)"/><rect x="-1.35" y="-6" width="2.7" height="3" fill="#1c1c1c" transform="rotate(270)"/><rect x="-1.35" y="-6" width="2.7" height="3" fill="#1c1c1c" transform="rotate(315)"/><circle r="3.7" fill="none" stroke="#1c1c1c" stroke-width="2"/></g><path d="M12.6 10.2V12.6H10.2Z" fill="#444"/></svg>
<svg class="ic" style="left:568px;top:4.3px" width="11.4" height="11.6" viewBox="0 0 11.4 11.6"><rect x=".55" y=".55" width="10.3" height="10.5" fill="#fff" stroke="#1c1c1c" stroke-width="1.1"/><path d="M.5 1.2H11" stroke="#1c1c1c" stroke-width="1.5"/><path d="M2.6 4.2H5.4L7.6 5.6L5.4 7H2.6Z" fill="none" stroke="#555" stroke-width=".7"/></svg>
<svg class="jt" style="position:absolute;left:584.4px;top:5.3px;" width="15.6" height="10.1" viewBox="0 -7.9 15.6 10.1" fill="#151515" stroke="#151515" stroke-width=".1"><text x="0" y="0" font-size="8.8" textLength="15.3" lengthAdjust="spacingAndGlyphs">起動</text></svg>
<svg class="ic" style="left:611.4px;top:8.5px" width="4.8" height="2.6" viewBox="0 0 4.8 2.6"><path d="M0 0H4.8L2.4 2.6Z" fill="#555"/></svg>
<div class="fld" style="left:907px;top:2.8px;width:49px;height:15.6px"></div>
<div class="cmb" style="left:955px;top:2.8px;width:12.4px;height:15.6px;background:#e6e6e6"></div>
<div class="t" style="left:910px;top:8.03px;font-size:8.0px;color:#111;transform:scaleX(0.95);transform-origin:0 0;">259%</div>
<svg class="ic" style="left:959.0px;top:8.7px" width="4.8" height="2.6" viewBox="0 0 4.8 2.6"><path d="M0 0H4.8L2.4 2.6Z" fill="#555"/></svg>
<svg class="ic" style="left:984.6px;top:7.8px" width="6" height="4.6" viewBox="0 0 6 4.6"><path d="M.4 .3L2.6 2.3L.4 4.3M3.2 .3L5.4 2.3L3.2 4.3" fill="none" stroke="#c2c2c2" stroke-width=".8"/></svg>
</div>
<div id="propbar">
<div class="cmb" style="left:5.2px;top:6.9px;width:112.6px;height:16.2px;"></div>
<div class="t" style="left:8.4px;top:11.46px;font-size:8.2px;color:#111;transform:scaleX(0.95);transform-origin:0 0;">A4</div>
<svg class="ic" style="left:109.5px;top:13.7px" width="5" height="2.8" viewBox="0 0 5 2.8"><path d="M0 0H5L2.5 2.8Z" fill="#555"/></svg>
<div class="sep" style="left:121.4px;top:4px;height:22px"></div>
<svg class="ic" style="left:126.8px;top:5.3px" width="8.2" height="8" viewBox="0 0 8.2 8"><path d="M.4 .5H7.8" stroke="#444" stroke-width=".8"/><path d="M.4 0V1.2M7.8 0V1.2" stroke="#444" stroke-width=".7"/><rect x=".5" y="2.6" width="7.2" height="5" fill="#fff" stroke="#444" stroke-width=".9"/></svg>
<svg class="ic" style="left:126.6px;top:16.1px" width="8.4" height="8.4" viewBox="0 0 8.4 8.4"><path d="M.5 .4V8" stroke="#444" stroke-width=".8"/><path d="M0 .4H1.2M0 8H1.2" stroke="#444" stroke-width=".7"/><rect x="2.6" y=".5" width="5.2" height="7.4" fill="#fff" stroke="#444" stroke-width=".9"/></svg>
<div class="fld" style="left:136.2px;top:4.0px;width:51.4px;height:11.2px;"></div>
<div class="cmb" style="left:186.8px;top:4.0px;width:17px;height:11.2px;background:#e9e9e9"></div>
<div class="t" style="left:139px;top:6.43px;font-size:8.0px;color:#111;transform:scaleX(0.92);transform-origin:0 0;">210.0 mm</div>
<svg class="ic" style="left:189.2px;top:8.55px" width="3.6" height="2.1" viewBox="0 0 3.6 2.1"><path d="M0 0H3.6L1.8 2.1Z" fill="#555"/></svg>
<svg class="ic" style="left:198.0px;top:8.35px" width="3.6" height="2.1" viewBox="0 0 3.6 2.1"><path d="M0 2.1H3.6L1.8 0Z" fill="#555"/></svg>
<div class="fld" style="left:136.2px;top:14.9px;width:51.4px;height:10.8px;"></div>
<div class="cmb" style="left:186.8px;top:14.9px;width:17px;height:10.8px;background:#e9e9e9"></div>
<div class="t" style="left:139px;top:17.33px;font-size:8.0px;color:#111;transform:scaleX(0.92);transform-origin:0 0;">297.0 mm</div>
<svg class="ic" style="left:189.2px;top:19.45px" width="3.6" height="2.1" viewBox="0 0 3.6 2.1"><path d="M0 0H3.6L1.8 2.1Z" fill="#555"/></svg>
<svg class="ic" style="left:198.0px;top:19.25px" width="3.6" height="2.1" viewBox="0 0 3.6 2.1"><path d="M0 2.1H3.6L1.8 0Z" fill="#555"/></svg>
<div class="sep" style="left:207.4px;top:4px;height:22px"></div>
<svg class="ic" style="left:213.6px;top:9.3px" width="12" height="12.4" viewBox="0 0 12 12.4"><path d="M.6 10.8L10.6 .6" stroke="#1c1c1c" stroke-width=".9"/><rect x="2.6" y="2.8" width="6.4" height="6.2" fill="#fff" stroke="#1c1c1c" stroke-width="1"/><circle cx="5.8" cy="5.9" r="1.3" fill="#1c1c1c"/><path d="M11.8 9.6V11.8H9.6Z" fill="#444"/></svg>
<div class="sep" style="left:230.6px;top:4px;height:22px"></div>
<div class="frm" style="left:236.2px;top:6.9px;width:15.8px;height:15.8px;"></div>
<svg class="ic" style="left:240px;top:9.3px" width="8.2" height="11.4" viewBox="0 0 8.2 11.4"><rect x=".55" y=".55" width="7.1" height="10.2" fill="#fff" stroke="#1c1c1c" stroke-width="1.1"/></svg>
<svg class="ic" style="left:257.2px;top:12.5px" width="11" height="8.2" viewBox="0 0 11 8.2"><rect x=".55" y=".55" width="9.9" height="7.1" fill="#fff" stroke="#1c1c1c" stroke-width="1.1"/></svg>
<div class="sep" style="left:275.4px;top:4px;height:22px"></div>
<div class="frm" style="left:281.2px;top:6.9px;width:16.2px;height:15.8px;"></div>
<svg class="ic" style="left:283.6px;top:9.5px" width="11.6" height="11.4" viewBox="0 0 11.6 11.4"><rect x=".5" y=".5" width="4.6" height="4.6" fill="#fff" stroke="#1c1c1c" stroke-width=".9"/><rect x="3.2" y="3" width="4.6" height="4.6" fill="#fff" stroke="#1c1c1c" stroke-width=".9"/><rect x="6.2" y="5.8" width="4.6" height="4.8" fill="#fff" stroke="#1c1c1c" stroke-width=".9"/></svg>
<svg class="ic" style="left:302.2px;top:9.3px" width="12.4" height="11.6" viewBox="0 0 12.4 11.6"><rect x=".5" y=".5" width="3" height="10.4" fill="#fff" stroke="#1c1c1c" stroke-width=".95"/><rect x="4.8" y="8" width="2.6" height="2.9" rx=".8" fill="#fff" stroke="#1c1c1c" stroke-width=".85"/><rect x="8.8" y="5" width="3" height="5.9" fill="#fff" stroke="#1c1c1c" stroke-width=".95"/></svg>
<div class="sep" style="left:322.2px;top:4px;height:22px"></div>
<svg class="jt" style="position:absolute;left:326.2px;top:10.2px;" width="17.2" height="10.1" viewBox="0 -7.9 17.2 10.1" fill="#151515" stroke="#151515" stroke-width=".1"><text x="0" y="0" font-size="8.8" textLength="16.6" lengthAdjust="spacingAndGlyphs">単位<tspan font-size="7.04">:</tspan></text></svg>
<div class="cmb" style="left:345.2px;top:6.9px;width:71.4px;height:16.2px;"></div>
<svg class="jt" style="position:absolute;left:347.8px;top:10.2px;" width="37.5" height="10.1" viewBox="0 -7.9 37.5 10.1" fill="#151515" stroke="#151515" stroke-width=".1"><text x="0" y="0" font-size="8.8" textLength="37" lengthAdjust="spacingAndGlyphs">ミリメートル</text></svg>
<svg class="ic" style="left:408.5px;top:13.7px" width="5" height="2.8" viewBox="0 0 5 2.8"><path d="M0 0H5L2.5 2.8Z" fill="#555"/></svg>
<div class="sep" style="left:420px;top:4px;height:22px"></div>
<svg class="ic" style="left:426.2px;top:9.9px" width="10.4" height="10.2" viewBox="0 0 10.4 10.2"><path d="M5.2 0L7.4 2.6H3ZM5.2 10.2L7.4 7.6H3ZM0 5.1L2.6 2.9V7.3ZM10.4 5.1L7.8 2.9V7.3Z" fill="#1c1c1c"/><rect x="3.4" y="2.9" width="3.6" height="4.4" rx="1.2" fill="#fff" stroke="#1c1c1c" stroke-width=".9"/></svg>
<div class="fld" style="left:438.6px;top:6.9px;width:44.6px;height:16.2px;"></div>
<div class="cmb" style="left:482.4px;top:6.9px;width:11.8px;height:16.2px;background:#e9e9e9"></div>
<div class="t" style="left:442px;top:11.63px;font-size:8.0px;color:#111;transform:scaleX(0.92);transform-origin:0 0;">0.1 mm</div>
<svg class="ic" style="left:486.2px;top:10.25px" width="3.6" height="2.1" viewBox="0 0 3.6 2.1"><path d="M0 2.1H3.6L1.8 0Z" fill="#555"/></svg>
<svg class="ic" style="left:486.2px;top:17.95px" width="3.6" height="2.1" viewBox="0 0 3.6 2.1"><path d="M0 0H3.6L1.8 2.1Z" fill="#555"/></svg>
<div class="sep" style="left:498.6px;top:4px;height:22px"></div>
<svg class="ic" style="left:503.4px;top:5.7px" width="8.4" height="8" viewBox="0 0 8.4 8"><rect x=".45" y=".45" width="3.6" height="3.8" fill="#fff" stroke="#444" stroke-width=".8"/><rect x="2.4" y="2.2" width="3.6" height="3.8" fill="#fff" stroke="#444" stroke-width=".8"/><path d="M5.6 5.6L7.6 7.8M7.6 5.6L5.6 7.8" stroke="#333" stroke-width=".7"/></svg>
<svg class="ic" style="left:503.4px;top:16.5px" width="8.4" height="8" viewBox="0 0 8.4 8"><rect x=".45" y=".45" width="3.6" height="3.8" fill="#fff" stroke="#444" stroke-width=".8"/><rect x="2.4" y="2.2" width="3.6" height="3.8" fill="#fff" stroke="#444" stroke-width=".8"/><path d="M5.6 5.4L6.6 6.6L7.6 5.4M6.6 6.6V8" stroke="#333" stroke-width=".7" fill="none"/></svg>
<div class="fld" style="left:513px;top:4.0px;width:51.4px;height:11.2px;"></div>
<div class="cmb" style="left:563.6px;top:4.0px;width:17px;height:11.2px;background:#e9e9e9"></div>
<div class="t" style="left:516.2px;top:6.43px;font-size:8.0px;color:#111;transform:scaleX(0.92);transform-origin:0 0;">5.0 mm</div>
<svg class="ic" style="left:566.2px;top:8.55px" width="3.6" height="2.1" viewBox="0 0 3.6 2.1"><path d="M0 0H3.6L1.8 2.1Z" fill="#555"/></svg>
<svg class="ic" style="left:574.6px;top:8.35px" width="3.6" height="2.1" viewBox="0 0 3.6 2.1"><path d="M0 2.1H3.6L1.8 0Z" fill="#555"/></svg>
<div class="fld" style="left:513px;top:14.9px;width:51.4px;height:10.8px;"></div>
<div class="cmb" style="left:563.6px;top:14.9px;width:17px;height:10.8px;background:#e9e9e9"></div>
<div class="t" style="left:516.2px;top:17.33px;font-size:8.0px;color:#111;transform:scaleX(0.92);transform-origin:0 0;">5.0 mm</div>
<svg class="ic" style="left:566.2px;top:19.45px" width="3.6" height="2.1" viewBox="0 0 3.6 2.1"><path d="M0 0H3.6L1.8 2.1Z" fill="#555"/></svg>
<svg class="ic" style="left:574.6px;top:19.25px" width="3.6" height="2.1" viewBox="0 0 3.6 2.1"><path d="M0 2.1H3.6L1.8 0Z" fill="#555"/></svg>
<div class="sep" style="left:584.6px;top:4px;height:22px"></div>
<div class="frm" style="left:588px;top:6.9px;width:15.8px;height:16.2px;"></div>
<svg class="ic" style="left:590.4px;top:9.1px" width="11.2" height="11.6" viewBox="0 0 11.2 11.6"><rect x=".7" y=".7" width="9" height="8.8" fill="none" stroke="#1c1c1c" stroke-width="1.3" stroke-dasharray="2 1.2"/><path d="M8.4 7.6L10.6 11.2L10.9 9.2Z" fill="#1c1c1c" stroke="#1c1c1c" stroke-width=".5"/></svg>
<div class="sep" style="left:607.4px;top:4px;height:22px"></div>
<svg class="ic" style="left:618.4px;top:11.1px" width="8" height="8" viewBox="0 0 8 8"><path d="M4 0V8M0 4H8" stroke="#a3a3a3" stroke-width="1"/></svg>
<svg class="ic" style="left:984.6px;top:12.7px" width="6" height="4.6" viewBox="0 0 6 4.6"><path d="M.4 .3L2.6 2.3L.4 4.3M3.2 .3L5.4 2.3L3.2 4.3" fill="none" stroke="#c2c2c2" stroke-width=".8"/></svg>
</div>
<div id="tabrow">
<div class="abs" style="left:23.6px;top:.6px;width:14px;height:13.4px;background:#dcdcdc"></div>
<div class="abs" style="left:37.4px;top:.6px;width:67px;height:13.4px;background:#cde1f7"></div>
<div class="abs" style="left:104.4px;top:.6px;width:14.4px;height:13.4px;background:#dadada"></div>
<svg class="ic" style="left:25.2px;top:1.6px" width="11.2" height="10.6" viewBox="0 0 11.2 10.6"><path d="M5.6 0L11.2 5.2H9.6V10.4H6.8V6.8H4.4V10.4H1.6V5.2H0Z" fill="#1c1c1c"/><rect x="8" y=".8" width="1.5" height="2.6" fill="#1c1c1c"/></svg>
<div class="t" style="left:41px;top:3.7px;font-size:8.5px;color:#1a1a1a;transform:scaleX(0.9);transform-origin:0 0;">n04_1.cdr</div>
<svg class="ic" style="left:107.8px;top:3.8px" width="7.4" height="7.4" viewBox="0 0 7.4 7.4"><path d="M3.7 0V7.4M0 3.7H7.4" stroke="#b2b2b2" stroke-width="1"/></svg>
<div class="abs" style="left:23.6px;top:14px;width:734.4px;height:1.4px;background:#86c6d6"></div>
</div>
<div id="toolbox">
<div class="frm" style="left:5.2px;top:2.4px;width:17px;height:16.2px;border-color:#cfcfcf"></div>
<svg class="ic" style="left:11px;top:5.2px" width="6.6" height="11.6" viewBox="0 0 6.6 11.6"><path d="M0 0V9L2.1 7.1L3.8 11.4L5.3 10.8L3.6 6.6L6.5 6.4Z" fill="#111"/></svg>
<svg class="ic" style="left:18.4px;top:15px" width="2.6" height="2.6" viewBox="0 0 2.6 2.6"><path d="M2.6 0V2.6H0Z" fill="#444"/></svg>
<svg class="ic" style="left:8.8px;top:24.2px" width="11" height="11.6" viewBox="0 0 11 11.6"><path d="M2.2 .6C1 3.6 2 8 6 10.6" fill="none" stroke="#1c1c1c" stroke-width="1"/><circle cx="1.9" cy="3.6" r="1.05" fill="#fff" stroke="#1c1c1c" stroke-width=".7"/><path d="M5.6 6.6L10.4 8.4L8.2 9L7.4 11.2Z" fill="#1c1c1c"/><path d="M11.9 12.299999999999999v-2.6l-2.6 2.6z" fill="#444"/></svg>
<div class="ts" style="top:41px"></div>
<svg class="ic" style="left:8px;top:46.8px" width="11.6" height="12" viewBox="0 0 11.6 12"><path d="M3.6 0V8.4H11.6M0 3.6H8V12" fill="none" stroke="#1c1c1c" stroke-width="1.5"/><path d="M12.5 12.7v-2.6l-2.6 2.6z" fill="#444"/></svg>
<svg class="ic" style="left:8px;top:65.4px" width="11.8" height="12" viewBox="0 0 11.8 12"><circle cx="4.8" cy="4.8" r="4.1" fill="none" stroke="#1c1c1c" stroke-width="1.1"/><path d="M7.8 7.8L11 11" stroke="#1c1c1c" stroke-width="1.5"/><path d="M12.700000000000001 12.7v-2.6l-2.6 2.6z" fill="#444"/></svg>
<div class="ts" style="top:82.7px"></div>
<svg class="ic" style="left:8px;top:88.6px" width="11.8" height="12" viewBox="0 0 11.8 12"><path d="M2.4 0V4.6M.2 2.3H4.6" stroke="#1c1c1c" stroke-width=".8"/><path d="M2.6 6V10.6C3.4 8 4.6 7.6 5.2 9.4C5.8 11.2 6.8 10.4 7.4 9C8 7.8 9 8.4 9.4 9.6C9.8 10.6 10.6 10.6 11.4 9.8" fill="none" stroke="#1c1c1c" stroke-width="1"/><path d="M12.700000000000001 12.7v-2.6l-2.6 2.6z" fill="#444"/></svg>
<svg class="ic" style="left:8px;top:106.8px" width="11.6" height="11.8" viewBox="0 0 11.6 11.8"><path d="M.8 2.6C1.6 .4 5 .2 5.8 2.6C6.6 5 3.2 6.6 4.4 9.2C5.4 11.4 9.6 11.2 10.4 8.2C10.8 6.6 9.8 5.4 8.6 5.6" fill="none" stroke="#1c1c1c" stroke-width="1.3" stroke-linecap="round"/><path d="M12.5 12.5v-2.6l-2.6 2.6z" fill="#444"/></svg>
<svg class="ic" style="left:8px;top:125.4px" width="11.6" height="11.6" viewBox="0 0 11.6 11.6"><rect x=".6" y=".6" width="10.4" height="10.4" fill="none" stroke="#1c1c1c" stroke-width="1.15"/><path d="M12.5 12.299999999999999v-2.6l-2.6 2.6z" fill="#444"/></svg>
<svg class="ic" style="left:8px;top:144.2px" width="11.6" height="11.8" viewBox="0 0 11.6 11.8"><circle cx="5.8" cy="5.9" r="5.2" fill="none" stroke="#1c1c1c" stroke-width="1.1"/><path d="M12.5 12.5v-2.6l-2.6 2.6z" fill="#444"/></svg>
<svg class="ic" style="left:8px;top:163px" width="11.6" height="11.8" viewBox="0 0 11.6 11.8"><path d="M3.2 .7H8.4L11 5.9L8.4 11.1H3.2L.6 5.9Z" fill="none" stroke="#1c1c1c" stroke-width="1.1"/><path d="M12.5 12.5v-2.6l-2.6 2.6z" fill="#444"/></svg>
<div class="ts" style="top:180.2px"></div>
<svg class="jt" style="position:absolute;left:7.4px;top:185.2px;" width="13.0" height="15.6" viewBox="0 -12.2 13.0 15.6" fill="#111"><text x="0" y="0" font-size="13.6" textLength="12.5" lengthAdjust="spacingAndGlyphs">あ</text></svg>
<svg class="ic" style="left:18.2px;top:196.2px" width="2.6" height="2.6" viewBox="0 0 2.6 2.6"><path d="M2.6 0V2.6H0Z" fill="#444"/></svg>
<div class="ts" style="top:203px"></div>
<svg class="ic" style="left:8px;top:208.6px" width="11.2" height="11.8" viewBox="0 0 11.2 11.8"><path d="M1.6 10.4L9.6 1.4" stroke="#1c1c1c" stroke-width="1"/><path d="M.2 8.8L3.2 11.6M8 .2L11 3" stroke="#1c1c1c" stroke-width="1"/><path d="M12.1 12.5v-2.6l-2.6 2.6z" fill="#444"/></svg>
<svg class="ic" style="left:8px;top:227.8px" width="11.4" height="11.4" viewBox="0 0 11.4 11.4"><path d="M1.6 1.8L9.6 9" stroke="#1c1c1c" stroke-width="1.1"/><rect x=".3" y=".3" width="2.8" height="2.8" fill="#d05a3a" stroke="#7a2412" stroke-width=".6"/><rect x="8" y="7.6" width="2.8" height="2.8" fill="#d05a3a" stroke="#7a2412" stroke-width=".6"/><path d="M12.3 12.1v-2.6l-2.6 2.6z" fill="#444"/></svg>
<div class="ts" style="top:245px"></div>
<svg class="ic" style="left:8px;top:251px" width="11.4" height="11.4" viewBox="0 0 11.4 11.4"><path d="M3.2 9.4V11H11V3.2H9.4" fill="none" stroke="#1c1c1c" stroke-width="1.3"/><rect x=".55" y=".55" width="8.4" height="8.4" fill="#fff" stroke="#1c1c1c" stroke-width="1.1"/><path d="M12.3 12.1v-2.6l-2.6 2.6z" fill="#444"/></svg>
<svg class="ic" style="left:8px;top:270px" width="11" height="11" viewBox="0 0 11 11"><rect x=".5" y=".5" width="10" height="10" fill="#fff" stroke="#111" stroke-width="1"/><rect x="1.00" y="1.00" width="2.25" height="2.25" fill="#111"/><rect x="5.50" y="1.00" width="2.25" height="2.25" fill="#111"/><rect x="3.25" y="3.25" width="2.25" height="2.25" fill="#111"/><rect x="7.75" y="3.25" width="2.25" height="2.25" fill="#111"/><rect x="1.00" y="5.50" width="2.25" height="2.25" fill="#111"/><rect x="5.50" y="5.50" width="2.25" height="2.25" fill="#111"/><rect x="3.25" y="7.75" width="2.25" height="2.25" fill="#111"/><rect x="7.75" y="7.75" width="2.25" height="2.25" fill="#111"/></svg>
<div class="ts" style="top:286px"></div>
<svg class="ic" style="left:8px;top:292.4px" width="10.8" height="11.8" viewBox="0 0 10.8 11.8"><path d="M.8 11L1.4 8.6L6.6 3.4L8.2 5L3 10.2Z" fill="#e9b27a" stroke="#7a3a14" stroke-width=".8"/><path d="M6 2.4L9.2 5.6M6.8 3L8.8 .8C9.6 0 10.8 1.2 10 2L8 4.2" fill="#1c1c1c" stroke="#1c1c1c" stroke-width="1.1"/><path d="M11.700000000000001 12.5v-2.6l-2.6 2.6z" fill="#444"/></svg>
<svg class="ic" style="left:8px;top:311px" width="11.8" height="12.4" viewBox="0 0 11.8 12.4"><path d="M5.2 .8L10 5.6L5.2 10.4L.6 5.6Z" fill="#fff" stroke="#1c1c1c" stroke-width="1.1"/><path d="M2.6 6.2H7.8L5.2 8.8Z" fill="#c8283a"/><path d="M9.8 7.4C10.8 8.8 11.4 9.6 11.4 10.4C11.4 11.2 10.7 11.8 9.9 11.8C9.1 11.8 8.4 11.2 8.4 10.4C8.4 9.6 9 8.8 9.8 7.4Z" fill="#c8283a"/><path d="M12.700000000000001 13.1v-2.6l-2.6 2.6z" fill="#444"/></svg>
<div class="ts" style="top:328px"></div>
<svg class="ic" style="left:8px;top:334px" width="11.4" height="12" viewBox="0 0 11.4 12"><path d="M.2 8.6C2.4 10.2 5.6 10 7 7.6C8 5.8 7.4 4.6 8.4 3.2C9.2 2 10.4 1 11.2 .2C10.6 2 11 3.4 10.8 5.2C10.4 9 7 12 3.6 11.6C2 11.4 .8 10.2 .2 8.6Z" fill="#111"/><path d="M6.2 3.6C7 3 8 2.6 8.8 2.4M5.8 5.4C6.6 5 7.4 4.8 8 4.8" stroke="#111" stroke-width=".8" fill="none"/></svg>
<div class="ts" style="top:351px"></div>
<svg class="ic" style="left:10px;top:362.4px" width="7.4" height="7.4" viewBox="0 0 7.4 7.4"><path d="M3.7 0V7.4M0 3.7H7.4" stroke="#b5b5b5" stroke-width="1"/></svg>
</div>
<div id="hruler">
<svg class="abs" style="left:0;top:0" width="734" height="11"><path d="M14.5 9.1V10.1M19.1 9.1V10.1M23.7 9.1V10.1M28.3 9.1V10.1M32.9 9.1V10.1M37.5 9.1V10.1M42.1 6.6V10.4M46.7 9.1V10.1M51.3 9.1V10.1M55.9 9.1V10.1M60.5 9.1V10.1M65.1 9.1V10.1M69.7 9.1V10.1M74.3 9.1V10.1M78.9 9.1V10.1M83.6 9.1V10.1M88.2 6.6V10.4M92.8 9.1V10.1M97.4 9.1V10.1M102.0 9.1V10.1M106.6 9.1V10.1M111.2 9.1V10.1M115.8 9.1V10.1M120.4 9.1V10.1M125.0 9.1V10.1M129.6 9.1V10.1M134.2 6.6V10.4M138.8 9.1V10.1M143.4 9.1V10.1M148.0 9.1V10.1M152.6 9.1V10.1M157.2 9.1V10.1M161.9 9.1V10.1M166.5 9.1V10.1M171.1 9.1V10.1M175.7 9.1V10.1M180.3 6.6V10.4M184.9 9.1V10.1M189.5 9.1V10.1M194.1 9.1V10.1M198.7 9.1V10.1M203.3 9.1V10.1M207.9 9.1V10.1M212.5 9.1V10.1M217.1 9.1V10.1M221.7 9.1V10.1M226.3 6.6V10.4M230.9 9.1V10.1M235.6 9.1V10.1M240.2 9.1V10.1M244.8 9.1V10.1M249.4 9.1V10.1M254.0 9.1V10.1M258.6 9.1V10.1M263.2 9.1V10.1M267.8 9.1V10.1M272.4 6.6V10.4M277.0 9.1V10.1M281.6 9.1V10.1M286.2 9.1V10.1M290.8 9.1V10.1M295.4 9.1V10.1M300.0 9.1V10.1M304.6 9.1V10.1M309.2 9.1V10.1M313.9 9.1V10.1M318.5 6.6V10.4M323.1 9.1V10.1M327.7 9.1V10.1M332.3 9.1V10.1M336.9 9.1V10.1M341.5 9.1V10.1M346.1 9.1V10.1M350.7 9.1V10.1M355.3 9.1V10.1M359.9 9.1V10.1M364.5 6.6V10.4M369.1 9.1V10.1M373.7 9.1V10.1M378.3 9.1V10.1M382.9 9.1V10.1M387.5 9.1V10.1M392.2 9.1V10.1M396.8 9.1V10.1M401.4 9.1V10.1M406.0 9.1V10.1M410.6 6.6V10.4M415.2 9.1V10.1M419.8 9.1V10.1M424.4 9.1V10.1M429.0 9.1V10.1M433.6 9.1V10.1M438.2 9.1V10.1M442.8 9.1V10.1M447.4 9.1V10.1M452.0 9.1V10.1M456.6 6.6V10.4M461.2 9.1V10.1M465.9 9.1V10.1M470.5 9.1V10.1M475.1 9.1V10.1M479.7 9.1V10.1M484.3 9.1V10.1M488.9 9.1V10.1M493.5 9.1V10.1M498.1 9.1V10.1M502.7 6.6V10.4M507.3 9.1V10.1M511.9 9.1V10.1M516.5 9.1V10.1M521.1 9.1V10.1M525.7 9.1V10.1M530.3 9.1V10.1M534.9 9.1V10.1M539.5 9.1V10.1M544.2 9.1V10.1M548.8 6.6V10.4M553.4 9.1V10.1M558.0 9.1V10.1M562.6 9.1V10.1M567.2 9.1V10.1M571.8 9.1V10.1M576.4 9.1V10.1M581.0 9.1V10.1M585.6 9.1V10.1M590.2 9.1V10.1M594.8 6.6V10.4M599.4 9.1V10.1M604.0 9.1V10.1M608.6 9.1V10.1M613.2 9.1V10.1M617.9 9.1V10.1M622.5 9.1V10.1M627.1 9.1V10.1M631.7 9.1V10.1M636.3 9.1V10.1M640.9 6.6V10.4M645.5 9.1V10.1M650.1 9.1V10.1M654.7 9.1V10.1M659.3 9.1V10.1M663.9 9.1V10.1M668.5 9.1V10.1M673.1 9.1V10.1M677.7 9.1V10.1M682.3 9.1V10.1M686.9 6.6V10.4M691.5 9.1V10.1M696.2 9.1V10.1M700.8 9.1V10.1M705.4 9.1V10.1M710.0 9.1V10.1M714.6 9.1V10.1M719.2 9.1V10.1M723.8 9.1V10.1M728.4 9.1V10.1" stroke="#a9a9a9" stroke-width=".8" fill="none"/></svg>
<div class="rn" style="left:38.3px;top:1.4px">30</div>
<div class="rn" style="left:84.4px;top:1.4px">40</div>
<div class="rn" style="left:130.4px;top:1.4px">50</div>
<div class="rn" style="left:176.5px;top:1.4px">60</div>
<div class="rn" style="left:222.5px;top:1.4px">70</div>
<div class="rn" style="left:268.6px;top:1.4px">80</div>
<div class="rn" style="left:314.7px;top:1.4px">90</div>
<div class="rn" style="left:359.3px;top:1.4px">100</div>
<div class="rn" style="left:405.4px;top:1.4px">110</div>
<div class="rn" style="left:451.4px;top:1.4px">120</div>
<div class="rn" style="left:497.5px;top:1.4px">130</div>
<div class="rn" style="left:543.6px;top:1.4px">140</div>
<div class="rn" style="left:589.6px;top:1.4px">150</div>
<div class="rn" style="left:635.7px;top:1.4px">160</div>
<div class="rn" style="left:681.7px;top:1.4px">170</div>
<svg class="jt" style="position:absolute;left:703.8px;top:1.0px;" width="28.9" height="7.4" viewBox="0 -5.8 28.9 7.4" fill="#9a9a9a"><text x="0" y="0" font-size="6.4" textLength="28.4" lengthAdjust="spacingAndGlyphs">ミリメートル</text></svg>
<svg class="ic" style="left:2.0px;top:1.6px" width="7.6" height="7.4" viewBox="0 0 7.6 7.4"><path d="M.6 .6L7.2 7M.6 .6H4.4M.6 .6V4.4" fill="none" stroke="#444" stroke-width=".8"/><path d="M2.2 .2V2.6M.2 2.2H2.6" stroke="#444" stroke-width=".5"/></svg>
</div>
<div id="vruler">
<svg class="abs" style="left:0;top:0" width="12.4" height="748"><path d="M10.1 743.6H11.1M10.1 739.0H11.1M10.1 734.4H11.1M10.1 729.8H11.1M10.1 725.2H11.1M10.1 720.6H11.1M10.1 716.0H11.1M7.4 711.4H11.4M10.1 706.8H11.1M10.1 702.2H11.1M10.1 697.6H11.1M10.1 693.0H11.1M10.1 688.4H11.1M10.1 683.8H11.1M10.1 679.2H11.1M10.1 674.6H11.1M10.1 670.0H11.1M7.4 665.4H11.4M10.1 660.8H11.1M10.1 656.2H11.1M10.1 651.6H11.1M10.1 647.0H11.1M10.1 642.4H11.1M10.1 637.8H11.1M10.1 633.2H11.1M10.1 628.6H11.1M10.1 624.0H11.1M7.4 619.4H11.4M10.1 614.8H11.1M10.1 610.2H11.1M10.1 605.6H11.1M10.1 601.0H11.1M10.1 596.4H11.1M10.1 591.8H11.1M10.1 587.2H11.1M10.1 582.6H11.1M10.1 578.0H11.1M7.4 573.4H11.4M10.1 568.8H11.1M10.1 564.2H11.1M10.1 559.6H11.1M10.1 555.0H11.1M10.1 550.4H11.1M10.1 545.8H11.1M10.1 541.2H11.1M10.1 536.6H11.1M10.1 532.0H11.1M7.4 527.4H11.4M10.1 522.8H11.1M10.1 518.2H11.1M10.1 513.6H11.1M10.1 509.0H11.1M10.1 504.4H11.1M10.1 499.8H11.1M10.1 495.2H11.1M10.1 490.6H11.1M10.1 486.0H11.1M7.4 481.4H11.4M10.1 476.8H11.1M10.1 472.2H11.1M10.1 467.6H11.1M10.1 463.0H11.1M10.1 458.4H11.1M10.1 453.8H11.1M10.1 449.2H11.1M10.1 444.6H11.1M10.1 440.0H11.1M7.4 435.4H11.4M10.1 430.8H11.1M10.1 426.2H11.1M10.1 421.6H11.1M10.1 417.0H11.1M10.1 412.4H11.1M10.1 407.8H11.1M10.1 403.2H11.1M10.1 398.6H11.1M10.1 394.0H11.1M7.4 389.4H11.4M10.1 384.8H11.1M10.1 380.2H11.1M10.1 375.6H11.1M10.1 371.0H11.1M10.1 366.4H11.1M10.1 361.8H11.1M10.1 357.2H11.1M10.1 352.6H11.1M10.1 348.0H11.1M7.4 343.4H11.4M10.1 338.8H11.1M10.1 334.2H11.1M10.1 329.6H11.1M10.1 325.0H11.1M10.1 320.4H11.1M10.1 315.8H11.1M10.1 311.2H11.1M10.1 306.6H11.1M10.1 302.0H11.1M7.4 297.4H11.4M10.1 292.8H11.1M10.1 288.2H11.1M10.1 283.6H11.1M10.1 279.0H11.1M10.1 274.4H11.1M10.1 269.8H11.1M10.1 265.2H11.1M10.1 260.6H11.1M10.1 256.0H11.1M7.4 251.4H11.4M10.1 246.8H11.1M10.1 242.2H11.1M10.1 237.6H11.1M10.1 233.0H11.1M10.1 228.4H11.1M10.1 223.8H11.1M10.1 219.2H11.1M10.1 214.6H11.1M10.1 210.0H11.1M7.4 205.4H11.4M10.1 200.8H11.1M10.1 196.2H11.1M10.1 191.6H11.1M10.1 187.0H11.1M10.1 182.4H11.1M10.1 177.8H11.1M10.1 173.2H11.1M10.1 168.6H11.1M10.1 164.0H11.1M7.4 159.4H11.4M10.1 154.8H11.1M10.1 150.2H11.1M10.1 145.6H11.1M10.1 141.0H11.1M10.1 136.4H11.1M10.1 131.8H11.1M10.1 127.2H11.1M10.1 122.6H11.1M10.1 118.0H11.1M7.4 113.4H11.4M10.1 108.8H11.1M10.1 104.2H11.1M10.1 99.6H11.1M10.1 95.0H11.1M10.1 90.4H11.1M10.1 85.8H11.1M10.1 81.2H11.1M10.1 76.6H11.1M10.1 72.0H11.1M7.4 67.4H11.4M10.1 62.8H11.1M10.1 58.2H11.1M10.1 53.6H11.1M10.1 49.0H11.1M10.1 44.4H11.1M10.1 39.8H11.1M10.1 35.2H11.1M10.1 30.6H11.1M10.1 26.0H11.1M7.4 21.4H11.4M10.1 16.8H11.1M10.1 12.2H11.1M10.1 7.6H11.1M10.1 3.0H11.1" stroke="#a9a9a9" stroke-width=".8" fill="none"/></svg>
<div class="rn" style="left:1.4px;top:668.2px;transform:rotate(-90deg);transform-origin:0 0">80</div>
<div class="rn" style="left:1.4px;top:622.2px;transform:rotate(-90deg);transform-origin:0 0">90</div>
<div class="rn" style="left:1.4px;top:577.6px;transform:rotate(-90deg);transform-origin:0 0">100</div>
<div class="rn" style="left:1.4px;top:531.6px;transform:rotate(-90deg);transform-origin:0 0">110</div>
<div class="rn" style="left:1.4px;top:485.6px;transform:rotate(-90deg);transform-origin:0 0">120</div>
<div class="rn" style="left:1.4px;top:439.6px;transform:rotate(-90deg);transform-origin:0 0">130</div>
<div class="rn" style="left:1.4px;top:393.6px;transform:rotate(-90deg);transform-origin:0 0">140</div>
<div class="rn" style="left:1.4px;top:347.6px;transform:rotate(-90deg);transform-origin:0 0">150</div>
<div class="rn" style="left:1.4px;top:301.6px;transform:rotate(-90deg);transform-origin:0 0">160</div>
<div class="rn" style="left:1.4px;top:255.6px;transform:rotate(-90deg);transform-origin:0 0">170</div>
<div class="rn" style="left:1.4px;top:209.6px;transform:rotate(-90deg);transform-origin:0 0">180</div>
<div class="rn" style="left:1.4px;top:163.6px;transform:rotate(-90deg);transform-origin:0 0">190</div>
<div class="rn" style="left:1.4px;top:117.6px;transform:rotate(-90deg);transform-origin:0 0">200</div>
<div class="rn" style="left:1.4px;top:71.6px;transform:rotate(-90deg);transform-origin:0 0">210</div>
<div class="rn" style="left:1.4px;top:25.6px;transform:rotate(-90deg);transform-origin:0 0">220</div>
<div class="abs" style="left:1.2px;top:745.6px;transform:rotate(-90deg);transform-origin:0 0"><svg class="jt" style="position:absolute;left:0px;top:-0.2px;" width="28.3" height="6.6" viewBox="0 -5.2 28.3 6.6" fill="#9a9a9a"><text x="0" y="0" font-size="5.8" textLength="27.8" lengthAdjust="spacingAndGlyphs">ミリメートル</text></svg></div>
</div>
<div id="hscroll">
<div class="abs" style="left:230.4px;top:3.4px;width:234.2px;height:4.6px;background:#838383"></div>
<svg class="ic" style="left:709.8px;top:1.6px" width="8" height="8.2" viewBox="0 0 8 8.2"><circle cx="3.3" cy="3.3" r="2.7" fill="#fff" stroke="#666" stroke-width=".8"/><path d="M5.2 5.2L7.6 7.8" stroke="#666" stroke-width="1.1"/><path d="M2 3.3H4.6M3.3 2V4.6" stroke="#666" stroke-width=".6"/></svg>
</div>
<div id="pagenav">
<svg class="ic" style="left:4.4px;top:4.2px" width="7" height="7" viewBox="0 0 7 7"><path d="M3.5 0V7M0 3.5H7" stroke="#1c1c1c" stroke-width="1.1"/></svg>
<svg class="ic" style="left:19.6px;top:4.4px" width="7.6" height="6.8" viewBox="0 0 7.6 6.8"><path d="M.6 0V6.8" stroke="#b0b0b0" stroke-width="1.1"/><path d="M7.4 0V6.8L2 3.4Z" fill="#b0b0b0"/></svg>
<svg class="ic" style="left:36.4px;top:4.6px" width="5.2" height="6.4" viewBox="0 0 5.2 6.4"><path d="M5.2 0V6.4L0 3.2Z" fill="#b0b0b0"/></svg>
<div class="t" style="left:52.0px;top:5.26px;font-size:8.2px;color:#707070;transform:scaleX(0.98);transform-origin:0 0;letter-spacing:.3px;">1 / 1</div>
<svg class="ic" style="left:80.8px;top:4.6px" width="5.2" height="6.4" viewBox="0 0 5.2 6.4"><path d="M0 0V6.4L5.2 3.2Z" fill="#b0b0b0"/></svg>
<svg class="ic" style="left:95.2px;top:4.4px" width="7.6" height="6.8" viewBox="0 0 7.6 6.8"><path d="M7 0V6.8" stroke="#b0b0b0" stroke-width="1.1"/><path d="M.2 0V6.8L5.6 3.4Z" fill="#b0b0b0"/></svg>
<svg class="ic" style="left:110.8px;top:4.2px" width="7" height="7" viewBox="0 0 7 7"><path d="M3.5 0V7M0 3.5H7" stroke="#1c1c1c" stroke-width="1.1"/></svg>
<div class="abs" style="left:122.4px;top:0;width:69.8px;height:15.6px;background:#d9d9d9"></div>
<svg class="jt" style="position:absolute;left:143.6px;top:4.3px;" width="27.4" height="10.1" viewBox="0 -7.9 27.4 10.1" fill="#1a1a1a" stroke="#1a1a1a" stroke-width=".1"><text x="0" y="0" font-size="8.8" textLength="26.9" lengthAdjust="spacingAndGlyphs">ページ <tspan font-size="7.57">1</tspan></text></svg>
</div>
<div id="docpal">
<svg class="ic" style="left:1.0px;top:1.6px" width="5" height="12.4" viewBox="0 0 5 12.4"><circle cx="1.0" cy="1.00" r=".55" fill="#bdbdbd"/><circle cx="4.2" cy="1.00" r=".55" fill="#bdbdbd"/><circle cx="2.6" cy="2.55" r=".55" fill="#bdbdbd"/><circle cx="1.0" cy="4.10" r=".55" fill="#bdbdbd"/><circle cx="4.2" cy="4.10" r=".55" fill="#bdbdbd"/><circle cx="2.6" cy="5.65" r=".55" fill="#bdbdbd"/><circle cx="1.0" cy="7.20" r=".55" fill="#bdbdbd"/><circle cx="4.2" cy="7.20" r=".55" fill="#bdbdbd"/><circle cx="2.6" cy="8.75" r=".55" fill="#bdbdbd"/><circle cx="1.0" cy="10.30" r=".55" fill="#bdbdbd"/><circle cx="4.2" cy="10.30" r=".55" fill="#bdbdbd"/><circle cx="2.6" cy="11.85" r=".55" fill="#bdbdbd"/></svg>
<svg class="ic" style="left:11.0px;top:5.6px" width="2.8" height="4.6" viewBox="0 0 2.8 4.6"><path d="M0 0V4.6L2.8 2.3Z" fill="#333"/></svg>
<svg class="ic" style="left:21.4px;top:2.4px" width="10.4" height="10.8" viewBox="0 0 10.4 10.8"><path d="M.6 10.2L1.2 8L6.2 3L7.8 4.6L2.8 9.6Z" fill="#e2a66c" stroke="#7a3a14" stroke-width=".75"/><path d="M5.6 2L8.8 5.2M6.4 2.6L8.4 .6C9.2 -.2 10.4 1 9.6 1.8L7.6 3.8" fill="#1c1c1c" stroke="#1c1c1c" stroke-width="1.05"/></svg>
<svg class="ic" style="left:37.2px;top:4.8px" width="3.6" height="6.2" viewBox="0 0 3.6 6.2"><path d="M3.4 .2L.4 3.1L3.4 6" fill="none" stroke="#c6c6c6" stroke-width=".9"/></svg>
<svg class="ic" style="left:45.0px;top:1.2px" width="12.4" height="12.6" viewBox="0 0 12.4 12.6"><rect x=".5" y=".5" width="11.4" height="11.6" fill="#fff" stroke="#8c8c8c" stroke-width=".9"/><path d="M2.4 10.2L10 2.4" stroke="#444" stroke-width=".8"/></svg>
<svg class="jt" style="position:absolute;left:244.4px;top:2.8px;" width="282.5" height="9.4" viewBox="0 -7.4 282.5 9.4" fill="#c4c4c4"><text x="0" y="0" font-size="8.2" textLength="282" lengthAdjust="spacingAndGlyphs">これらのカラーをドキュメントに保存するには、カラー <tspan font-size="7.05">(</tspan>またはオブジェクト<tspan font-size="7.05">)</tspan> をここにドラッグします</text></svg>
<svg class="ic" style="left:708.2px;top:4.4px" width="3.4" height="6" viewBox="0 0 3.4 6"><path d="M.3 .2L3 3L.3 5.8" fill="none" stroke="#d4d4d4" stroke-width=".8"/></svg>
<svg class="ic" style="left:718.0px;top:4.6px" width="6.4" height="5.4" viewBox="0 0 6.4 5.4"><path d="M.4 .3L2.8 2.7L.4 5.1M3.4 .3L5.8 2.7L3.4 5.1" fill="none" stroke="#b5b5b5" stroke-width=".8"/></svg>
</div>
<div id="statusbar">
<svg class="ic" style="left:9px;top:5.9px" width="12" height="12" viewBox="0 0 12 12"><g transform="translate(6 6)"><rect x="-1.35" y="-6" width="2.7" height="3" fill="#1c1c1c" transform="rotate(0)"/><rect x="-1.35" y="-6" width="2.7" height="3" fill="#1c1c1c" transform="rotate(45)"/><rect x="-1.35" y="-6" width="2.7" height="3" fill="#1c1c1c" transform="rotate(90)"/><rect x="-1.35" y="-6" width="2.7" height="3" fill="#1c1c1c" transform="rotate(135)"/><rect x="-1.35" y="-6" width="2.7" height="3" fill="#1c1c1c" transform="rotate(180)"/><rect x="-1.35" y="-6" width="2.7" height="3" fill="#1c1c1c" transform="rotate(225)"/><rect x="-1.35" y="-6" width="2.7" height="3" fill="#1c1c1c" transform="rotate(270)"/><rect x="-1.35" y="-6" width="2.7" height="3" fill="#1c1c1c" transform="rotate(315)"/><circle r="3.7" fill="none" stroke="#1c1c1c" stroke-width="2"/></g><path d="M12.8 10.4V12.8H10.4Z" fill="#444"/></svg>
<svg class="jt" style="position:absolute;left:26.4px;top:6.2px;" width="671.5" height="11.0" viewBox="0 -8.6 671.5 11.0" fill="#141414" stroke="#141414" stroke-width=".1"><text x="0" y="0" font-size="9.5" textLength="671" lengthAdjust="spacingAndGlyphs">クリックでドラッグ<tspan font-size="7.6">/</tspan>スケールを操作、もう一度クリックすると回転<tspan font-size="7.6">/</tspan>斜変形を操作できます。ツールをダブルクリックで描画内の全オブジェクトを選択、<tspan font-size="7.6">Shift + </tspan>クリックで複数選択、<tspan font-size="7.6">Alt + </tspan>クリックで後ろに隠れたオブジェクトを選択。</text></svg>
<svg class="ic" style="left:735.8px;top:6.7px" width="11.8" height="11.6" viewBox="0 0 11.8 11.6"><path d="M5 .8L9.6 5.4L5 10L.6 5.4Z" fill="#fff" stroke="#1c1c1c" stroke-width="1"/><path d="M2.6 6H7.4L5 8.4Z" fill="#c8283a"/><path d="M9.6 7.2C10.6 8.6 11.2 9.4 11.2 10.1C11.2 10.9 10.5 11.5 9.7 11.5C8.9 11.5 8.2 10.9 8.2 10.1C8.2 9.4 8.8 8.6 9.6 7.2Z" fill="#c8283a"/></svg>
<svg class="ic" style="left:749px;top:4.7px" width="14" height="14.4" viewBox="0 0 14 14.4"><rect x=".5" y=".5" width="13" height="13.4" fill="#fff" stroke="#9a9a9a" stroke-width=".9"/><path d="M1.4 13L12.6 1.4" stroke="#8a1a1a" stroke-width="1"/></svg>
<svg class="jt" style="position:absolute;left:765.6px;top:6.4px;" width="14.8" height="10.9" viewBox="0 -8.5 14.8 10.9" fill="#141414" stroke="#141414" stroke-width=".1"><text x="0" y="0" font-size="9.4" textLength="14.4" lengthAdjust="spacingAndGlyphs">なし</text></svg>
<svg class="ic" style="left:879.4px;top:6.5px" width="6.6" height="11.6" viewBox="0 0 6.6 11.6"><path d="M3.3 0L5.6 4.8L4.4 7H2.2L1 4.8Z" fill="#fff" stroke="#1c1c1c" stroke-width=".8"/><path d="M3.3 .6V4.4" stroke="#1c1c1c" stroke-width=".6"/><circle cx="3.3" cy="4.6" r=".7" fill="#1c1c1c"/><rect x="1.2" y="7.6" width="4.2" height="3.6" fill="#fff" stroke="#1c1c1c" stroke-width=".8"/></svg>
<div class="abs" style="left:889px;top:5.3px;width:13.8px;height:13.8px;background:#231815;border:1px solid #777"></div>
<div class="t" style="left:906.4px;top:9.16px;font-size:8.2px;color:#1a1a1a;transform:scaleX(0.857);transform-origin:0 0;-webkit-text-stroke:0.1px #1a1a1a;">C:0 M:0 Y:0 K:100</div>
<div class="t" style="left:966.2px;top:9.16px;font-size:8.2px;color:#1a1a1a;transform:scaleX(0.95);transform-origin:0 0;-webkit-text-stroke:0.1px #1a1a1a;">0.567 pt</div>
</div>
<div id="vscroll"><div class="abs" style="left:3.6px;top:279.6px;width:4.8px;height:185px;background:#868686"></div></div>
<div id="docker">
<div class="hd"></div>
<svg class="jt" style="position:absolute;left:4.5px;top:4.4px;" width="46.8" height="9.7" viewBox="0 -7.6 46.8 9.7" fill="#161616" stroke="#161616" stroke-width=".15"><text x="0" y="0" font-size="8.4" textLength="46.3" lengthAdjust="spacingAndGlyphs">オブジェクト <tspan font-size="7.06">(O)</tspan></text></svg>
<svg class="ic" style="left:200px;top:5.4px" width="7.4" height="5.8" viewBox="0 0 7.4 5.8"><path d="M0 0V5.8L3.4 2.9ZM3.8 0V5.8L7.2 2.9Z" fill="#bdbdbd"/></svg>
<svg class="ic" style="left:214px;top:5px" width="6.8" height="6.8" viewBox="0 0 6.8 6.8"><path d="M.3 .3L6.5 6.5M6.5 .3L.3 6.5" stroke="#a9a9a9" stroke-width="1"/></svg>
<div class="fld" style="left:1.4px;top:19.8px;width:208.6px;height:16.2px;border-color:#c9c9c9"></div>
<svg class="jt" style="position:absolute;left:4.2px;top:23.5px;" width="15.6" height="9.8" viewBox="0 -7.7 15.6 9.8" fill="#9b9b9b"><text x="0" y="0" font-size="8.6" textLength="15.2" lengthAdjust="spacingAndGlyphs">検索</text></svg>
<div class="abs" style="left:0;top:36.6px;width:210px;height:20.6px;background:#f3f3f3"></div>
<div class="frm" style="left:1.8px;top:39.2px;width:14.8px;height:16.4px;border-color:#c9c9c9"></div>
<svg class="ic" style="left:3.6px;top:41.4px" width="11.6" height="12" viewBox="0 0 11.6 12"><path d="M2.8 .5H7L9.4 2.9V5M4.6 10.6H.5V2.8L2.8 .5" fill="none" stroke="#1c1c1c" stroke-width=".9"/><path d="M7.6 4.8L11 6.7L7.6 8.6L4.2 6.7Z" fill="#fff" stroke="#1c1c1c" stroke-width=".7"/><path d="M4.4 8.4L7.6 10.2L10.8 8.4L9.6 7.8L7.6 8.9L5.6 7.8Z" fill="#1c1c1c"/><path d="M4.4 10L7.6 11.8L10.8 10L9.6 9.4L7.6 10.5L5.6 9.4Z" fill="#1c1c1c"/></svg>
<svg class="ic" style="left:22px;top:41px" width="11.2" height="11.8" viewBox="0 0 11.2 11.8"><path d="M5.6 .3L11 3.3L5.6 6.3L.2 3.3Z" fill="#fff" stroke="#1c1c1c" stroke-width=".95" stroke-linejoin="round"/><path d="M.4 6L5.6 9L10.8 6L9 5L5.6 7L2.2 5Z" fill="#1c1c1c"/><path d="M.4 8.4L5.6 11.4L10.8 8.4L9 7.4L5.6 9.4L2.2 7.4Z" fill="#1c1c1c"/></svg>
<svg class="jt" style="position:absolute;left:38.2px;top:42.4px;" width="27.3" height="9.7" viewBox="0 -7.6 27.3 9.7" fill="#111"><text x="0" y="0" font-size="8.4" font-weight="bold" textLength="26.8" lengthAdjust="spacingAndGlyphs">ページ <tspan font-size="7.06">1</tspan></text></svg>
<svg class="jt" style="position:absolute;left:77px;top:42.4px;" width="23.5" height="9.7" viewBox="0 -7.6 23.5 9.7" fill="#222"><text x="0" y="0" font-size="8.4" textLength="23" lengthAdjust="spacingAndGlyphs">レイヤ <tspan font-size="7.06">1</tspan></text></svg>
<svg class="ic" style="left:197px;top:41.6px" width="11" height="11" viewBox="0 0 11 11"><g transform="translate(5.5 5.5)"><rect x="-1.3" y="-5.5" width="2.6" height="2.8" fill="#1c1c1c" transform="rotate(0)"/><rect x="-1.3" y="-5.5" width="2.6" height="2.8" fill="#1c1c1c" transform="rotate(45)"/><rect x="-1.3" y="-5.5" width="2.6" height="2.8" fill="#1c1c1c" transform="rotate(90)"/><rect x="-1.3" y="-5.5" width="2.6" height="2.8" fill="#1c1c1c" transform="rotate(135)"/><rect x="-1.3" y="-5.5" width="2.6" height="2.8" fill="#1c1c1c" transform="rotate(180)"/><rect x="-1.3" y="-5.5" width="2.6" height="2.8" fill="#1c1c1c" transform="rotate(225)"/><rect x="-1.3" y="-5.5" width="2.6" height="2.8" fill="#1c1c1c" transform="rotate(270)"/><rect x="-1.3" y="-5.5" width="2.6" height="2.8" fill="#1c1c1c" transform="rotate(315)"/><circle r="3.4" fill="none" stroke="#1c1c1c" stroke-width="1.9"/></g><path d="M11.8 9.6V11.8H9.6Z" fill="#444"/></svg>
<div class="row" style="top:57.40px;background:#f3f3f3"></div>
<div class="rl" style="top:75.16px"></div>
<div class="rl" style="top:93.42px"></div>
<div class="rl" style="top:111.68px"></div>
<svg class="ic" style="left:5.8px;top:64.8px" width="5.6" height="3.8" viewBox="0 0 5.6 3.8"><path d="M0 0H5.6L2.8 3.8Z" fill="#1c1c1c"/></svg>
<svg class="jt" style="position:absolute;left:23.2px;top:61.7px;" width="26.8" height="9.7" viewBox="0 -7.6 26.8 9.7" fill="#111"><text x="0" y="0" font-size="8.4" font-weight="bold" textLength="26.3" lengthAdjust="spacingAndGlyphs">ページ <tspan font-size="7.06">1</tspan></text></svg>
<svg class="ic" style="left:17px;top:80.26px" width="10" height="9.6" viewBox="0 0 10 9.6"><path d="M3 0V9.6" stroke="#9a9a9a" stroke-width=".8" stroke-dasharray="1.6 .8"/><path d="M0 2.6H10" stroke="#9a9a9a" stroke-width=".8" stroke-dasharray="1.6 .8"/></svg>
<svg class="jt" style="position:absolute;left:44px;top:80.06px;" width="17.9" height="9.7" viewBox="0 -7.6 17.9 9.7" fill="#222"><text x="0" y="0" font-size="8.4" textLength="17.4" lengthAdjust="spacingAndGlyphs">ガイド</text></svg>
<svg class="ic" style="left:177.6px;top:81.26px" width="8.4" height="7.2" viewBox="0 0 8.4 7.2"><path d="M2.2 3V.4H5L6.2 1.6V3" fill="#fff" stroke="#555" stroke-width=".7"/><path d="M.4 6.8V3.2H8V6.8Z" fill="#fff" stroke="#555" stroke-width=".75"/><path d="M.4 5.4H8" stroke="#555" stroke-width=".7"/></svg>
<div class="abs" style="left:191.4px;top:78.66px;width:3.6px;height:12.2px;border-radius:1.8px;background:#1515c8"></div>
<svg class="ic" style="left:5.8px;top:101.52px" width="5.6" height="3.8" viewBox="0 0 5.6 3.8"><path d="M0 0H5.6L2.8 3.8Z" fill="#1c1c1c"/></svg>
<svg class="ic" style="left:17.6px;top:98.52px" width="9" height="9.6" viewBox="0 0 11.2 11.8"><path d="M5.6 .3L11 3.3L5.6 6.3L.2 3.3Z" fill="#fff" stroke="#1c1c1c" stroke-width=".95" stroke-linejoin="round"/><path d="M.4 6L5.6 9L10.8 6L9 5L5.6 7L2.2 5Z" fill="#1c1c1c"/><path d="M.4 8.4L5.6 11.4L10.8 8.4L9 7.4L5.6 9.4L2.2 7.4Z" fill="#1c1c1c"/></svg>
<svg class="jt" style="position:absolute;left:44px;top:98.32px;" width="24.7" height="9.7" viewBox="0 -7.6 24.7 9.7" fill="#111"><text x="0" y="0" font-size="8.4" font-weight="bold" textLength="24.2" lengthAdjust="spacingAndGlyphs">レイヤ <tspan font-size="7.06">1</tspan></text></svg>
<div class="abs" style="left:191.4px;top:96.52px;width:3.6px;height:12.4px;border-radius:1.8px;background:#151515"></div>
<svg class="ic" style="left:20px;top:113.60px" width="16" height="16" viewBox="-8 -8 16 16"><path d="M-6 -4C-3 -3 2 -1 6 -1" fill="none" stroke="#3a8a6d" stroke-width="1.4" stroke-linecap="round" stroke-linejoin="round"/><path d="M1 -5C0 -2 -1 1 -1 3" fill="none" stroke="#3a8a6d" stroke-width="1.6" stroke-linecap="round" stroke-linejoin="round"/></svg>
<svg class="jt" style="position:absolute;left:49.6px;top:117.0px;" width="16.7" height="10.0" viewBox="0 -7.8 16.7 10.0" fill="#1c1c1c"><text x="0" y="0" font-size="8.7" textLength="16.2" lengthAdjust="spacingAndGlyphs">曲線</text></svg>
<svg class="ic" style="left:20px;top:131.86px" width="16" height="16" viewBox="-8 -8 16 16"><path d="M-5 -6C-2 -5 1 0 5 5C2 6 -3 2 -5 -3Z" fill="#3a8a6d"/></svg>
<svg class="jt" style="position:absolute;left:49.6px;top:135.26px;" width="16.7" height="10.0" viewBox="0 -7.8 16.7 10.0" fill="#1c1c1c"><text x="0" y="0" font-size="8.7" textLength="16.2" lengthAdjust="spacingAndGlyphs">曲線</text></svg>
<svg class="ic" style="left:20px;top:150.12px" width="16" height="16" viewBox="-8 -8 16 16"><path d="M-7 1C-4 -3 0 -5 3 -3C5 -1 6 3 5 6C3 3 2 0 0 -1C-2 -2 -4 -1 -7 1Z" fill="#3a8a6d"/></svg>
<svg class="jt" style="position:absolute;left:49.6px;top:153.52px;" width="16.7" height="10.0" viewBox="0 -7.8 16.7 10.0" fill="#1c1c1c"><text x="0" y="0" font-size="8.7" textLength="16.2" lengthAdjust="spacingAndGlyphs">曲線</text></svg>
<svg class="ic" style="left:20px;top:168.38px" width="16" height="16" viewBox="-8 -8 16 16"><path d="M-4 -6C-1 -5 2 0 3 6C1 4 -2 -1 -4 -4Z" fill="#3a8a6d"/></svg>
<svg class="jt" style="position:absolute;left:49.6px;top:171.78px;" width="16.7" height="10.0" viewBox="0 -7.8 16.7 10.0" fill="#1c1c1c"><text x="0" y="0" font-size="8.7" textLength="16.2" lengthAdjust="spacingAndGlyphs">曲線</text></svg>
<svg class="ic" style="left:20px;top:186.64px" width="16" height="16" viewBox="-8 -8 16 16"><path d="M6 -2C3 -3 -1 -5 -4 -3C-7 -1 -4 3 0 4C-2 2 -3 0 -2 -1C0 -2 3 -1 6 -2Z" fill="#3a8a6d"/></svg>
<svg class="jt" style="position:absolute;left:49.6px;top:190.04px;" width="16.7" height="10.0" viewBox="0 -7.8 16.7 10.0" fill="#1c1c1c"><text x="0" y="0" font-size="8.7" textLength="16.2" lengthAdjust="spacingAndGlyphs">曲線</text></svg>
<svg class="ic" style="left:20px;top:204.90px" width="16" height="16" viewBox="-8 -8 16 16"><path d="M-4 -3C-1 -5 2 -4 4 -5C2 -3 0 -2 1 0C2 2 4 3 4 5" fill="none" stroke="#3a8a6d" stroke-width="1.8" stroke-linecap="round" stroke-linejoin="round"/><path d="M-2 -1C-4 0 -5 1 -4 3" fill="none" stroke="#3a8a6d" stroke-width="1.5" stroke-linecap="round" stroke-linejoin="round"/></svg>
<svg class="jt" style="position:absolute;left:49.6px;top:208.3px;" width="16.7" height="10.0" viewBox="0 -7.8 16.7 10.0" fill="#1c1c1c"><text x="0" y="0" font-size="8.7" textLength="16.2" lengthAdjust="spacingAndGlyphs">曲線</text></svg>
<svg class="ic" style="left:20px;top:223.16px" width="16" height="16" viewBox="-8 -8 16 16"><path d="M-5 -6C-3 -7 -1 -5 -1 -3C1 0 4 3 5 6C2 4 -1 1 -3 -2C-5 -3 -6 -5 -5 -6Z" fill="#3a8a6d"/></svg>
<svg class="jt" style="position:absolute;left:49.6px;top:226.56px;" width="16.7" height="10.0" viewBox="0 -7.8 16.7 10.0" fill="#1c1c1c"><text x="0" y="0" font-size="8.7" textLength="16.2" lengthAdjust="spacingAndGlyphs">曲線</text></svg>
<svg class="ic" style="left:20px;top:241.42px" width="16" height="16" viewBox="-8 -8 16 16"><path d="M4 -6C0 -7 -5 -3 -5 1C-5 5 0 7 5 5C6 3 3 3 0 2C-2 1 -1 -2 4 -4Z" fill="#3a8a6d"/></svg>
<svg class="jt" style="position:absolute;left:49.6px;top:244.82px;" width="16.7" height="10.0" viewBox="0 -7.8 16.7 10.0" fill="#1c1c1c"><text x="0" y="0" font-size="8.7" textLength="16.2" lengthAdjust="spacingAndGlyphs">曲線</text></svg>
<svg class="ic" style="left:20px;top:259.68px" width="16" height="16" viewBox="-8 -8 16 16"><path d="M-7 -6C-5 -6 -3 -1 -2 1C0 -2 3 -6 5 -5C7 -3 5 -1 3 0C1 1 -1 3 -2 5C-4 3 -6 -2 -7 -6Z" fill="#3a8a6d"/></svg>
<svg class="jt" style="position:absolute;left:49.6px;top:263.08px;" width="16.7" height="10.0" viewBox="0 -7.8 16.7 10.0" fill="#1c1c1c"><text x="0" y="0" font-size="8.7" textLength="16.2" lengthAdjust="spacingAndGlyphs">曲線</text></svg>
<svg class="ic" style="left:20px;top:277.94px" width="16" height="16" viewBox="-8 -8 16 16"><path d="M-6 -6C-4 -6 -3 -3 -1 0C1 2 4 4 7 6C3 6 -1 4 -3 1C-5 -1 -7 -4 -6 -6Z" fill="#3a8a6d"/></svg>
<svg class="jt" style="position:absolute;left:49.6px;top:281.34px;" width="16.7" height="10.0" viewBox="0 -7.8 16.7 10.0" fill="#1c1c1c"><text x="0" y="0" font-size="8.7" textLength="16.2" lengthAdjust="spacingAndGlyphs">曲線</text></svg>
<svg class="ic" style="left:20px;top:296.20px" width="16" height="16" viewBox="-8 -8 16 16"><path d="M-7 0C-6 -5 0 -7 4 -5C7 -4 7 -1 5 0C3 -1 1 -1 0 0C2 2 0 3 -1 2C-2 4 -3 6 -5 7C-3 4 -3 2 -4 0Z" fill="#3a8a6d"/></svg>
<svg class="jt" style="position:absolute;left:49.6px;top:299.6px;" width="16.7" height="10.0" viewBox="0 -7.8 16.7 10.0" fill="#1c1c1c"><text x="0" y="0" font-size="8.7" textLength="16.2" lengthAdjust="spacingAndGlyphs">曲線</text></svg>
<svg class="ic" style="left:20px;top:314.46px" width="16" height="16" viewBox="-8 -8 16 16"><path d="M-6 -4C-4 -2 -3 2 0 3C2 3 4 1 6 -1" fill="none" stroke="#3a8a6d" stroke-width="1.7" stroke-linecap="round" stroke-linejoin="round"/></svg>
<svg class="jt" style="position:absolute;left:49.6px;top:317.86px;" width="16.7" height="10.0" viewBox="0 -7.8 16.7 10.0" fill="#1c1c1c"><text x="0" y="0" font-size="8.7" textLength="16.2" lengthAdjust="spacingAndGlyphs">曲線</text></svg>
<svg class="ic" style="left:20px;top:332.72px" width="16" height="16" viewBox="-8 -8 16 16"><path d="M-6 -4C-4 -8 0 -6 2 -2C4 1 6 4 6 6C3 7 -1 3 -4 0C-6 -1 -7 -3 -6 -4Z" fill="#3a8a6d"/></svg>
<svg class="jt" style="position:absolute;left:49.6px;top:336.12px;" width="16.7" height="10.0" viewBox="0 -7.8 16.7 10.0" fill="#1c1c1c"><text x="0" y="0" font-size="8.7" textLength="16.2" lengthAdjust="spacingAndGlyphs">曲線</text></svg>
<svg class="ic" style="left:20px;top:350.98px" width="16" height="16" viewBox="-8 -8 16 16"><path d="M-7 0C-5 0 -2 2 -1 2C1 0 4 -3 6 -3C7 -2 6 -1 4 1C2 3 0 5 -2 5C-4 4 -6 2 -7 0Z" fill="#3a8a6d"/></svg>
<svg class="jt" style="position:absolute;left:49.6px;top:354.38px;" width="16.7" height="10.0" viewBox="0 -7.8 16.7 10.0" fill="#1c1c1c"><text x="0" y="0" font-size="8.7" textLength="16.2" lengthAdjust="spacingAndGlyphs">曲線</text></svg>
<svg class="ic" style="left:20px;top:369.24px" width="16" height="16" viewBox="-8 -8 16 16"><path d="M6 -7C7 -6 5 -4 3 -2C1 1 -2 5 -4 6C-6 7 -7 5 -5 3C-3 1 -1 -2 1 -4C3 -6 5 -7 6 -7Z" fill="#3a8a6d"/></svg>
<svg class="jt" style="position:absolute;left:49.6px;top:372.64px;" width="16.7" height="10.0" viewBox="0 -7.8 16.7 10.0" fill="#1c1c1c"><text x="0" y="0" font-size="8.7" textLength="16.2" lengthAdjust="spacingAndGlyphs">曲線</text></svg>
<svg class="ic" style="left:20px;top:387.50px" width="16" height="16" viewBox="-8 -8 16 16"><path d="M-6 -1C-5 -5 0 -7 3 -5C6 -3 6 3 4 7C2 6 3 2 2 -1C1 -3 -2 -3 -3 -1C-4 0 -6 0 -6 -1Z" fill="#3a8a6d"/></svg>
<svg class="jt" style="position:absolute;left:49.6px;top:390.9px;" width="16.7" height="10.0" viewBox="0 -7.8 16.7 10.0" fill="#1c1c1c"><text x="0" y="0" font-size="8.7" textLength="16.2" lengthAdjust="spacingAndGlyphs">曲線</text></svg>
<svg class="ic" style="left:20px;top:405.76px" width="16" height="16" viewBox="-8 -8 16 16"><ellipse cx="0" cy="0" rx="7.4" ry="5.4" fill="#3a8a6d" transform="rotate(-38)"/></svg>
<svg class="jt" style="position:absolute;left:49.6px;top:409.16px;" width="16.7" height="10.0" viewBox="0 -7.8 16.7 10.0" fill="#1c1c1c"><text x="0" y="0" font-size="8.7" textLength="16.2" lengthAdjust="spacingAndGlyphs">曲線</text></svg>
<svg class="ic" style="left:20px;top:424.02px" width="16" height="16" viewBox="-8 -8 16 16"><path d="M-7 -6C-2 -7 4 -1 6 6C1 6 -5 0 -7 -6Z" fill="#3a8a6d"/></svg>
<svg class="jt" style="position:absolute;left:49.6px;top:427.42px;" width="16.7" height="10.0" viewBox="0 -7.8 16.7 10.0" fill="#1c1c1c"><text x="0" y="0" font-size="8.7" textLength="16.2" lengthAdjust="spacingAndGlyphs">曲線</text></svg>
<svg class="ic" style="left:20px;top:442.28px" width="16" height="16" viewBox="-8 -8 16 16"><path d="M-6 -6C-3 -7 2 -1 5 6C2 4 -1 0 -3 -3C-4 -4 -6 -5 -6 -6Z" fill="#3a8a6d"/></svg>
<svg class="jt" style="position:absolute;left:49.6px;top:445.68px;" width="16.7" height="10.0" viewBox="0 -7.8 16.7 10.0" fill="#1c1c1c"><text x="0" y="0" font-size="8.7" textLength="16.2" lengthAdjust="spacingAndGlyphs">曲線</text></svg>
<svg class="ic" style="left:20px;top:460.54px" width="16" height="16" viewBox="-8 -8 16 16"><ellipse cx="0" cy="0" rx="7.2" ry="3.6" fill="#3a8a6d" transform="rotate(28)"/></svg>
<svg class="jt" style="position:absolute;left:49.6px;top:463.94px;" width="16.7" height="10.0" viewBox="0 -7.8 16.7 10.0" fill="#1c1c1c"><text x="0" y="0" font-size="8.7" textLength="16.2" lengthAdjust="spacingAndGlyphs">曲線</text></svg>
<svg class="ic" style="left:20px;top:478.80px" width="16" height="16" viewBox="-8 -8 16 16"><path d="M-6 -3C-5 -5 -2 -5 -1 -2C0 1 -1 3 -1 4C1 2 3 2 5 4" fill="none" stroke="#3a8a6d" stroke-width="1.6" stroke-linecap="round" stroke-linejoin="round"/></svg>
<svg class="jt" style="position:absolute;left:49.6px;top:482.2px;" width="16.7" height="10.0" viewBox="0 -7.8 16.7 10.0" fill="#1c1c1c"><text x="0" y="0" font-size="8.7" textLength="16.2" lengthAdjust="spacingAndGlyphs">曲線</text></svg>
<svg class="ic" style="left:20px;top:497.06px" width="16" height="16" viewBox="-8 -8 16 16"><ellipse cx="0" cy="0" rx="6.8" ry="3.8" fill="#3a8a6d" transform="rotate(14)"/></svg>
<svg class="jt" style="position:absolute;left:49.6px;top:500.46px;" width="16.7" height="10.0" viewBox="0 -7.8 16.7 10.0" fill="#1c1c1c"><text x="0" y="0" font-size="8.7" textLength="16.2" lengthAdjust="spacingAndGlyphs">曲線</text></svg>
<svg class="ic" style="left:20px;top:515.32px" width="16" height="16" viewBox="-8 -8 16 16"><path d="M-5 -6C-4 -4 -2 -4 -1 -2C0 0 -2 1 -1 3C0 4 2 4 3 6" fill="none" stroke="#3a8a6d" stroke-width="2" stroke-linecap="round" stroke-linejoin="round"/></svg>
<svg class="jt" style="position:absolute;left:49.6px;top:518.72px;" width="16.7" height="10.0" viewBox="0 -7.8 16.7 10.0" fill="#1c1c1c"><text x="0" y="0" font-size="8.7" textLength="16.2" lengthAdjust="spacingAndGlyphs">曲線</text></svg>
<svg class="ic" style="left:20px;top:533.58px" width="16" height="16" viewBox="-8 -8 16 16"><ellipse cx="0" cy="0" rx="7.2" ry="3.2" fill="#3a8a6d" transform="rotate(30)"/></svg>
<svg class="jt" style="position:absolute;left:49.6px;top:536.98px;" width="16.7" height="10.0" viewBox="0 -7.8 16.7 10.0" fill="#1c1c1c"><text x="0" y="0" font-size="8.7" textLength="16.2" lengthAdjust="spacingAndGlyphs">曲線</text></svg>
<svg class="ic" style="left:20px;top:551.84px" width="16" height="16" viewBox="-8 -8 16 16"><ellipse cx="0" cy="0" rx="8" ry="2.6" fill="#3a8a6d" transform="rotate(36)"/></svg>
<svg class="jt" style="position:absolute;left:49.6px;top:555.24px;" width="16.7" height="10.0" viewBox="0 -7.8 16.7 10.0" fill="#1c1c1c"><text x="0" y="0" font-size="8.7" textLength="16.2" lengthAdjust="spacingAndGlyphs">曲線</text></svg>
<svg class="ic" style="left:20px;top:570.10px" width="16" height="16" viewBox="-8 -8 16 16"><path d="M-7 -2C-5 -3 -3 0 -2 2C0 1 4 -3 6 -5C5 -2 2 2 -1 4C-2 6 -4 6 -3 4C-5 3 -7 0 -7 -2Z" fill="#3a8a6d"/></svg>
<svg class="jt" style="position:absolute;left:49.6px;top:573.5px;" width="16.7" height="10.0" viewBox="0 -7.8 16.7 10.0" fill="#1c1c1c"><text x="0" y="0" font-size="8.7" textLength="16.2" lengthAdjust="spacingAndGlyphs">曲線</text></svg>
<svg class="ic" style="left:20px;top:588.36px" width="16" height="16" viewBox="-8 -8 16 16"><path d="M-6 -6C-4 -4 -2 -4 -1 -2C1 0 3 3 5 6" fill="none" stroke="#3a8a6d" stroke-width="1.9" stroke-linecap="round" stroke-linejoin="round"/></svg>
<svg class="jt" style="position:absolute;left:49.6px;top:591.76px;" width="16.7" height="10.0" viewBox="0 -7.8 16.7 10.0" fill="#1c1c1c"><text x="0" y="0" font-size="8.7" textLength="16.2" lengthAdjust="spacingAndGlyphs">曲線</text></svg>
<svg class="ic" style="left:20px;top:606.62px" width="16" height="16" viewBox="-8 -8 16 16"><path d="M-7 -2C-3 0 2 0 7 -3C4 2 -3 3 -7 -2Z" fill="#3a8a6d"/></svg>
<svg class="jt" style="position:absolute;left:49.6px;top:610.02px;" width="16.7" height="10.0" viewBox="0 -7.8 16.7 10.0" fill="#1c1c1c"><text x="0" y="0" font-size="8.7" textLength="16.2" lengthAdjust="spacingAndGlyphs">曲線</text></svg>
<svg class="ic" style="left:20px;top:624.88px" width="16" height="16" viewBox="-8 -8 16 16"><path d="M-6 1C-4 -2 -2 -2 0 0C2 2 4 1 6 -1" fill="none" stroke="#3a8a6d" stroke-width="2.6" stroke-linecap="round" stroke-linejoin="round"/></svg>
<svg class="jt" style="position:absolute;left:49.6px;top:628.28px;" width="16.7" height="10.0" viewBox="0 -7.8 16.7 10.0" fill="#1c1c1c"><text x="0" y="0" font-size="8.7" textLength="16.2" lengthAdjust="spacingAndGlyphs">曲線</text></svg>
<svg class="ic" style="left:20px;top:643.14px" width="16" height="16" viewBox="-8 -8 16 16"><path d="M2 -7C-2 -6 -6 -2 -5 2C-4 6 2 7 5 5C7 3 4 1 1 1C-1 0 1 -3 4 -4C5 -6 4 -7 2 -7Z" fill="#3a8a6d"/></svg>
<svg class="jt" style="position:absolute;left:49.6px;top:646.54px;" width="16.7" height="10.0" viewBox="0 -7.8 16.7 10.0" fill="#1c1c1c"><text x="0" y="0" font-size="8.7" textLength="16.2" lengthAdjust="spacingAndGlyphs">曲線</text></svg>
<svg class="ic" style="left:20px;top:661.40px" width="16" height="16" viewBox="-8 -8 16 16"><path d="M-5 -6C-2 -4 3 -5 6 -7C6 -4 4 -1 2 0C4 1 3 2 1 2C0 4 -3 6 -6 7C-3 4 -2 2 -3 0C-5 -1 -6 -4 -5 -6Z" fill="#3a8a6d"/></svg>
<svg class="jt" style="position:absolute;left:49.6px;top:664.8px;" width="16.7" height="10.0" viewBox="0 -7.8 16.7 10.0" fill="#1c1c1c"><text x="0" y="0" font-size="8.7" textLength="16.2" lengthAdjust="spacingAndGlyphs">曲線</text></svg>
<svg class="ic" style="left:20px;top:679.66px" width="16" height="16" viewBox="-8 -8 16 16"><path d="M3 -7C6 -7 7 -4 5 -2C3 -1 2 -1 0 2C-1 5 -3 7 -5 6C-7 5 -5 2 -3 0C-1 -2 0 -3 0 -5C0 -6 1 -7 3 -7Z" fill="#3a8a6d"/></svg>
<svg class="jt" style="position:absolute;left:49.6px;top:683.06px;" width="16.7" height="10.0" viewBox="0 -7.8 16.7 10.0" fill="#1c1c1c"><text x="0" y="0" font-size="8.7" textLength="16.2" lengthAdjust="spacingAndGlyphs">曲線</text></svg>
<svg class="ic" style="left:20px;top:697.92px" width="16" height="16" viewBox="-8 -8 16 16"><path d="M-7 -7C-3 -5 3 0 7 6C2 4 -4 -1 -7 -7Z" fill="#3a8a6d"/></svg>
<svg class="jt" style="position:absolute;left:49.6px;top:701.32px;" width="16.7" height="10.0" viewBox="0 -7.8 16.7 10.0" fill="#1c1c1c"><text x="0" y="0" font-size="8.7" textLength="16.2" lengthAdjust="spacingAndGlyphs">曲線</text></svg>
<svg class="ic" style="left:20px;top:716.18px" width="16" height="16" viewBox="-8 -8 16 16"><path d="M6 -7C4 -3 0 3 -3 6C-5 7 -7 5 -5 2C-2 -2 2 -6 6 -7Z" fill="#3a8a6d"/></svg>
<svg class="jt" style="position:absolute;left:49.6px;top:719.58px;" width="16.7" height="10.0" viewBox="0 -7.8 16.7 10.0" fill="#1c1c1c"><text x="0" y="0" font-size="8.7" textLength="16.2" lengthAdjust="spacingAndGlyphs">曲線</text></svg>
<svg class="ic" style="left:20px;top:734.44px" width="16" height="16" viewBox="-8 -8 16 16"><path d="M-1 -7C1 -7 1 -4 2 -2C4 -1 6 0 5 3C4 6 -1 7 -4 5C-7 3 -6 0 -3 -1C-2 -3 -2 -6 -1 -7Z" fill="#3a8a6d"/></svg>
<svg class="jt" style="position:absolute;left:49.6px;top:737.84px;" width="16.7" height="10.0" viewBox="0 -7.8 16.7 10.0" fill="#1c1c1c"><text x="0" y="0" font-size="8.7" textLength="16.2" lengthAdjust="spacingAndGlyphs">曲線</text></svg>
<svg class="ic" style="left:20px;top:752.70px" width="16" height="16" viewBox="-8 -8 16 16"><path d="M-2 -7C0 -7 1 -6 1 -3C1 0 4 2 6 4C7 6 4 7 1 6C-2 6 -5 5 -7 4C-5 2 -3 1 -3 -2C-3 -5 -3 -7 -2 -7Z" fill="#3a8a6d"/></svg>
<svg class="jt" style="position:absolute;left:49.6px;top:756.1px;" width="16.7" height="10.0" viewBox="0 -7.8 16.7 10.0" fill="#1c1c1c"><text x="0" y="0" font-size="8.7" textLength="16.2" lengthAdjust="spacingAndGlyphs">曲線</text></svg>
<svg class="ic" style="left:20px;top:770.96px" width="16" height="16" viewBox="-8 -8 16 16"><path d="M-6 -7C-4 -5 -3 -2 -3 0C-2 2 0 2 1 4C3 3 5 1 7 0C5 4 2 7 -1 7C-3 6 -2 4 -4 3C-6 1 -7 -4 -6 -7Z" fill="#3a8a6d"/></svg>
<svg class="jt" style="position:absolute;left:49.6px;top:774.36px;" width="16.7" height="10.0" viewBox="0 -7.8 16.7 10.0" fill="#1c1c1c"><text x="0" y="0" font-size="8.7" textLength="16.2" lengthAdjust="spacingAndGlyphs">曲線</text></svg>
<div class="abs" style="left:197.8px;top:57.40px;width:12.2px;height:732.2px;background:#f2f2f2"></div>
<div class="abs" style="left:202.2px;top:70.0px;width:4.6px;height:31.8px;background:#8e8e8e"></div>
<div class="abs" style="left:0;top:789.6px;width:225px;height:16px;background:#f3f3f3;border-top:1px solid #e4e4e4"></div>
<svg class="ic" style="left:3px;top:792.2px" width="12.4" height="11.4" viewBox="0 0 12.4 11.4"><path d="M4.6 2.6L9.2 5.2L4.6 7.8L0 5.2Z" fill="#1c1c1c"/><path d="M.2 7L4.6 9.5L9 7L7.8 6.3L4.6 8.1L1.4 6.3Z" fill="#1c1c1c"/><path d="M.2 8.8L4.6 11.3L9 8.8L7.8 8.1L4.6 9.9L1.4 8.1Z" fill="#1c1c1c"/><rect x="7.4" y="0" width="4.8" height="4.8" fill="#1e9a3c"/><path d="M9.8 0.9v3M8.3 2.4h3" stroke="#fff" stroke-width=".9"/></svg>
<svg class="ic" style="left:22.4px;top:792.2px" width="12.6" height="12" viewBox="0 0 12.6 12"><path d="M4.6 2.6L9.2 5.2L4.6 7.8L0 5.2Z" fill="#fff" stroke="#1c1c1c" stroke-width=".7"/><path d="M.2 7L4.6 9.5L9 7" fill="none" stroke="#1c1c1c" stroke-width=".8"/><path d="M.2 8.8L4.6 11.3L9 8.8" fill="none" stroke="#1c1c1c" stroke-width=".8"/><rect x="7.4" y="0" width="4.8" height="4.8" fill="#1e9a3c"/><path d="M9.8 0.9v3M8.3 2.4h3" stroke="#fff" stroke-width=".9"/><path d="M12.6 9.8V12H10.4Z" fill="#555"/></svg>
<svg class="ic" style="left:42px;top:793px" width="9.6" height="9.6" viewBox="0 0 9.6 9.6"><path d="M.4 9L3 2.6L5.2 7.4" fill="none" stroke="#c4c4c4" stroke-width=".9"/><rect x="5.2" y=".4" width="4" height="4" fill="none" stroke="#c4c4c4" stroke-width=".8"/><path d="M7.2 1.4V3.4M6.2 2.4H8.2" stroke="#c4c4c4" stroke-width=".6"/></svg>
<svg class="ic" style="left:61.2px;top:792.6px" width="8.8" height="10.4" viewBox="0 0 8.8 10.4"><path d="M1 2.6H7.8L7.2 10H1.6Z" fill="#c6c6c6"/><path d="M.2 1.8H8.6M3 1.6V.5H5.8V1.6" stroke="#c6c6c6" stroke-width=".9" fill="none"/><path d="M3.2 4V8.6M4.4 4V8.6M5.6 4V8.6" stroke="#e8e8e8" stroke-width=".5"/></svg>
<svg class="ic" style="left:126px;top:792.6px" width="81.4" height="10.6" viewBox="0 0 81.4 10.6"><path d="M0 5.3H81M.4 1V9.6M40.4 2V8.6M81 1V9.6" stroke="#bdbdbd" stroke-width=".8" fill="none"/><rect x="23.2" y="-1.8" width="5" height="13.6" fill="#eaf4fa" stroke="#6aa6c8" stroke-width=".9"/></svg>
</div>
<div id="dtabs">
<div class="abs" style="left:0;top:0;width:13.6px;height:48.4px;background:#dcdcdc"></div>
<div class="abs" style="left:0;top:48.4px;width:13.6px;height:82.4px;background:#d0e3f6"></div>
<div class="abs" style="left:0;top:130.8px;width:13.6px;height:67.4px;background:#dddddd"></div>
<div class="abs" style="left:0;top:198.6px;width:13.6px;height:66.9px;background:#dddddd"></div>
<svg class="ic" style="left:2.4px;top:2.6px" width="9.8" height="10" viewBox="0 0 9.8 10"><path d="M4.9 0L9.8 2.6L4.9 5.2L0 2.6Z" fill="#1c1c1c"/><path d="M1.6 4.4V9.4H8.2V4.4L4.9 6.2Z" fill="#1c1c1c"/><path d="M6 6.6V8.4" stroke="#fff" stroke-width=".8"/><path d="M9.2 3V6.4" stroke="#1c1c1c" stroke-width=".7"/></svg>
<div class="abs" style="left:4.20px;top:17.60px;transform:rotate(90deg);transform-origin:0 0"><svg class="jt" style="position:absolute;left:0px;top:-7.7px;" width="16.3" height="9.8" viewBox="0 -7.7 16.3 9.8" fill="#1a1a1a"><text x="0" y="0" font-size="8.6" textLength="15.9" lengthAdjust="spacingAndGlyphs">学習</text></svg></div>
<svg class="ic" style="left:2.0px;top:52.2px" width="10.4" height="11" viewBox="0 0 10.4 11"><path d="M5.2 .4L10 3.2L5.2 6L.4 3.2Z" fill="none" stroke="#1c1c1c" stroke-width=".85" stroke-linejoin="round"/><path d="M.4 5.6L5.2 8.4L10 5.6M.4 7.8L5.2 10.6L10 7.8" fill="none" stroke="#1c1c1c" stroke-width=".85" stroke-linejoin="round"/></svg>
<div class="abs" style="left:4.20px;top:67.40px;transform:rotate(90deg);transform-origin:0 0"><svg class="jt" style="position:absolute;left:0px;top:-7.7px;" width="50.2" height="9.8" viewBox="0 -7.7 50.2 9.8" fill="#1a1a1a" stroke="#1a1a1a" stroke-width=".1"><text x="0" y="0" font-size="8.6" textLength="49.7" lengthAdjust="spacingAndGlyphs">オブジェクト <tspan font-size="7.22">(O)</tspan></text></svg></div>
<svg class="ic" style="left:1.8px;top:135.6px" width="11" height="9.6" viewBox="0 0 11 9.6"><path d="M1.6 7.6C1 3 3.4 .6 5.5 .6C7.6 .6 10 3 9.4 7.6" fill="none" stroke="#8fb4cf" stroke-width=".9"/><circle cx="1.5" cy="8" r="1.1" fill="#fff" stroke="#1c1c1c" stroke-width=".7"/><circle cx="9.5" cy="8" r="1.1" fill="#fff" stroke="#1c1c1c" stroke-width=".7"/></svg>
<div class="abs" style="left:4.20px;top:149.80px;transform:rotate(90deg);transform-origin:0 0"><svg class="jt" style="position:absolute;left:0px;top:-7.7px;" width="37.0" height="9.8" viewBox="0 -7.7 37.0 9.8" fill="#1a1a1a" stroke="#1a1a1a" stroke-width=".1"><text x="0" y="0" font-size="8.6" textLength="36.5" lengthAdjust="spacingAndGlyphs">曲線の結合</text></svg></div>
<svg class="ic" style="left:2.0px;top:206.8px" width="10.6" height="10.6" viewBox="0 0 10.6 10.6"><path d="M.6 5.2L4.4 1.4L7.2 4.2L3.4 8Z" fill="#fff" stroke="#1c1c1c" stroke-width=".85"/><circle cx="2.2" cy="9" r="1" fill="#1c1c1c"/><path d="M7.6 1V5M9.2 .4V4.4" stroke="#1c1c1c" stroke-width=".8"/></svg>
<div class="abs" style="left:4.20px;top:222.00px;transform:rotate(90deg);transform-origin:0 0"><svg class="jt" style="position:absolute;left:0px;top:-7.7px;" width="30.6" height="9.8" viewBox="0 -7.7 30.6 9.8" fill="#1a1a1a" stroke="#1a1a1a" stroke-width=".1"><text x="0" y="0" font-size="8.6" textLength="30.1" lengthAdjust="spacingAndGlyphs">プロパティ</text></svg></div>
<svg class="ic" style="left:4.0px;top:270.0px" width="7" height="7" viewBox="0 0 7 7"><path d="M3.5 0V7M0 3.5H7" stroke="#a9a9a9" stroke-width="1"/></svg>
</div>
<div id="palette">
<svg class="ic" style="left:2.2px;top:1.6px" width="12" height="4.6" viewBox="0 0 12 4.6"><circle cx="0.8" cy="0.8" r=".5" fill="#c4c4c4"/><circle cx="3.4" cy="0.8" r=".5" fill="#c4c4c4"/><circle cx="6.0" cy="0.8" r=".5" fill="#c4c4c4"/><circle cx="8.6" cy="0.8" r=".5" fill="#c4c4c4"/><circle cx="11.2" cy="0.8" r=".5" fill="#c4c4c4"/><circle cx="2.1" cy="2.3" r=".5" fill="#c4c4c4"/><circle cx="4.7" cy="2.3" r=".5" fill="#c4c4c4"/><circle cx="7.3" cy="2.3" r=".5" fill="#c4c4c4"/><circle cx="9.9" cy="2.3" r=".5" fill="#c4c4c4"/><circle cx="0.8" cy="3.8" r=".5" fill="#c4c4c4"/><circle cx="3.4" cy="3.8" r=".5" fill="#c4c4c4"/><circle cx="6.0" cy="3.8" r=".5" fill="#c4c4c4"/><circle cx="8.6" cy="3.8" r=".5" fill="#c4c4c4"/><circle cx="11.2" cy="3.8" r=".5" fill="#c4c4c4"/></svg>
<svg class="ic" style="left:6.2px;top:10.2px" width="3" height="5" viewBox="0 0 3 5"><path d="M0 0V5L3 2.5Z" fill="#333"/></svg>
<svg class="ic" style="left:3px;top:22.2px" width="9.4" height="9.4" viewBox="0 0 9.4 9.4"><path d="M.5 8.9L1 7L5.4 2.6L6.8 4L2.4 8.4Z" fill="#e0e0e0" stroke="#bcbcbc" stroke-width=".7"/><path d="M5 1.8L7.6 4.4M5.6 2.2L7.4 .5C8.1 -.2 9.1 .8 8.4 1.5L6.6 3.2" fill="#c2c2c2" stroke="#c2c2c2" stroke-width=".9"/></svg>
<svg class="ic" style="left:4px;top:36.8px" width="7.4" height="4" viewBox="0 0 7.4 4"><path d="M.4 3.7L3.7 .5L7 3.7" fill="none" stroke="#d2d2d2" stroke-width=".9"/></svg>
<svg class="ic" style="left:2.2px;top:45.4px" width="12" height="11.8" viewBox="0 0 12 11.8"><rect x=".45" y=".45" width="11.1" height="10.9" fill="#fff" stroke="#8a8a8a" stroke-width=".9"/><path d="M1.6 10.2L10.4 1.6" stroke="#555" stroke-width=".8"/></svg>
<i style="top:57.4px;background:#2b2523"></i>
<i style="top:69.1px;background:#3e3a39"></i>
<i style="top:80.8px;background:#595757"></i>
<i style="top:92.5px;background:#727171"></i>
<i style="top:104.2px;background:#898989"></i>
<i style="top:115.9px;background:#9fa0a0"></i>
<i style="top:127.6px;background:#b5b5b6"></i>
<i style="top:139.3px;background:#c9caca"></i>
<i style="top:151.0px;background:#dcdddd"></i>
<i style="top:162.7px;background:#efefef"></i>
<i style="top:174.4px;background:#ffffff"></i>
<i style="top:186.1px;background:#1d2088"></i>
<i style="top:197.8px;background:#00a0e9"></i>
<i style="top:209.5px;background:#009944"></i>
<i style="top:221.2px;background:#fff100"></i>
<i style="top:232.9px;background:#e60012"></i>
<i style="top:244.6px;background:#e4007f"></i>
<i style="top:256.3px;background:#b5468f"></i>
<i style="top:268.0px;background:#f39800"></i>
<i style="top:279.7px;background:#f5b2b2"></i>
<i style="top:291.4px;background:#8c7468"></i>
<i style="top:303.1px;background:#d3d0e6"></i>
<i style="top:314.8px;background:#a99ccb"></i>
<i style="top:326.5px;background:#7b8fd0"></i>
<i style="top:338.2px;background:#7f6fb8"></i>
<i style="top:349.9px;background:#8a7fb8"></i>
<i style="top:361.6px;background:#4f5f96"></i>
<i style="top:373.3px;background:#574a78"></i>
<i style="top:385.0px;background:#7f8fb0"></i>
<i style="top:396.7px;background:#0a84d6"></i>
<i style="top:408.4px;background:#a0d8f8"></i>
<i style="top:420.1px;background:#c5d2d8"></i>
<i style="top:431.8px;background:#9fb0b8"></i>
<i style="top:443.5px;background:#6f7f88"></i>
<i style="top:455.2px;background:#48525c"></i>
<i style="top:466.9px;background:#4f7a78"></i>
<i style="top:478.6px;background:#3f8a78"></i>
<i style="top:490.3px;background:#7fa09a"></i>
<i style="top:502.0px;background:#4fa898"></i>
<i style="top:513.7px;background:#4fa870"></i>
<i style="top:525.4px;background:#5fc0d0"></i>
<i style="top:537.1px;background:#58b0c0"></i>
<i style="top:548.8px;background:#c0cdb8"></i>
<i style="top:560.5px;background:#d0ead8"></i>
<i style="top:572.2px;background:#a0d8c0"></i>
<i style="top:583.9px;background:#9aa89a"></i>
<i style="top:595.6px;background:#a0a870"></i>
<i style="top:607.3px;background:#c0d060"></i>
<i style="top:619.0px;background:#b8c890"></i>
<i style="top:630.7px;background:#a8d010"></i>
<i style="top:642.4px;background:#d0e070"></i>
<i style="top:654.1px;background:#58584a"></i>
<i style="top:665.8px;background:#88887a"></i>
<i style="top:677.5px;background:#b0b0a0"></i>
<i style="top:689.2px;background:#b0a868"></i>
<i style="top:700.9px;background:#d8d060"></i>
<i style="top:712.6px;background:#f8f070"></i>
<i style="top:724.3px;background:#fff8a0"></i>
<i style="top:736.0px;background:#fffcd0"></i>
<i style="top:747.7px;background:#b89868"></i>
<i style="top:759.4px;background:#e89a50"></i>
<i style="top:771.1px;height:5.8px;background:#d9a548"></i>
<svg class="ic" style="left:4.2px;top:779.8px" width="7.4" height="4" viewBox="0 0 7.4 4"><path d="M.4 .3L3.7 3.5L7 .3" fill="none" stroke="#9a9a9a" stroke-width=".9"/></svg>
<svg class="ic" style="left:4.6px;top:791.6px" width="6.4" height="5.4" viewBox="0 0 6.4 5.4"><path d="M.4 .3L2.8 2.7L.4 5.1M3.4 .3L5.8 2.7L3.4 5.1" fill="none" stroke="#b9b9b9" stroke-width=".8"/></svg>
</div>
<svg id="frame" width="1000" height="920" viewBox="0 0 1000 920"><path fill-rule="evenodd" fill="#10152a" d="M0 0H1000V920H0Z M8 1.5H993Q1000 1.5 1000 8.5V911.5Q1000 918.5 993 918.5H8Q1 918.5 1 911.5V8.5Q1 1.5 8 1.5Z"/></svg>
</div>
</body>
</html>
